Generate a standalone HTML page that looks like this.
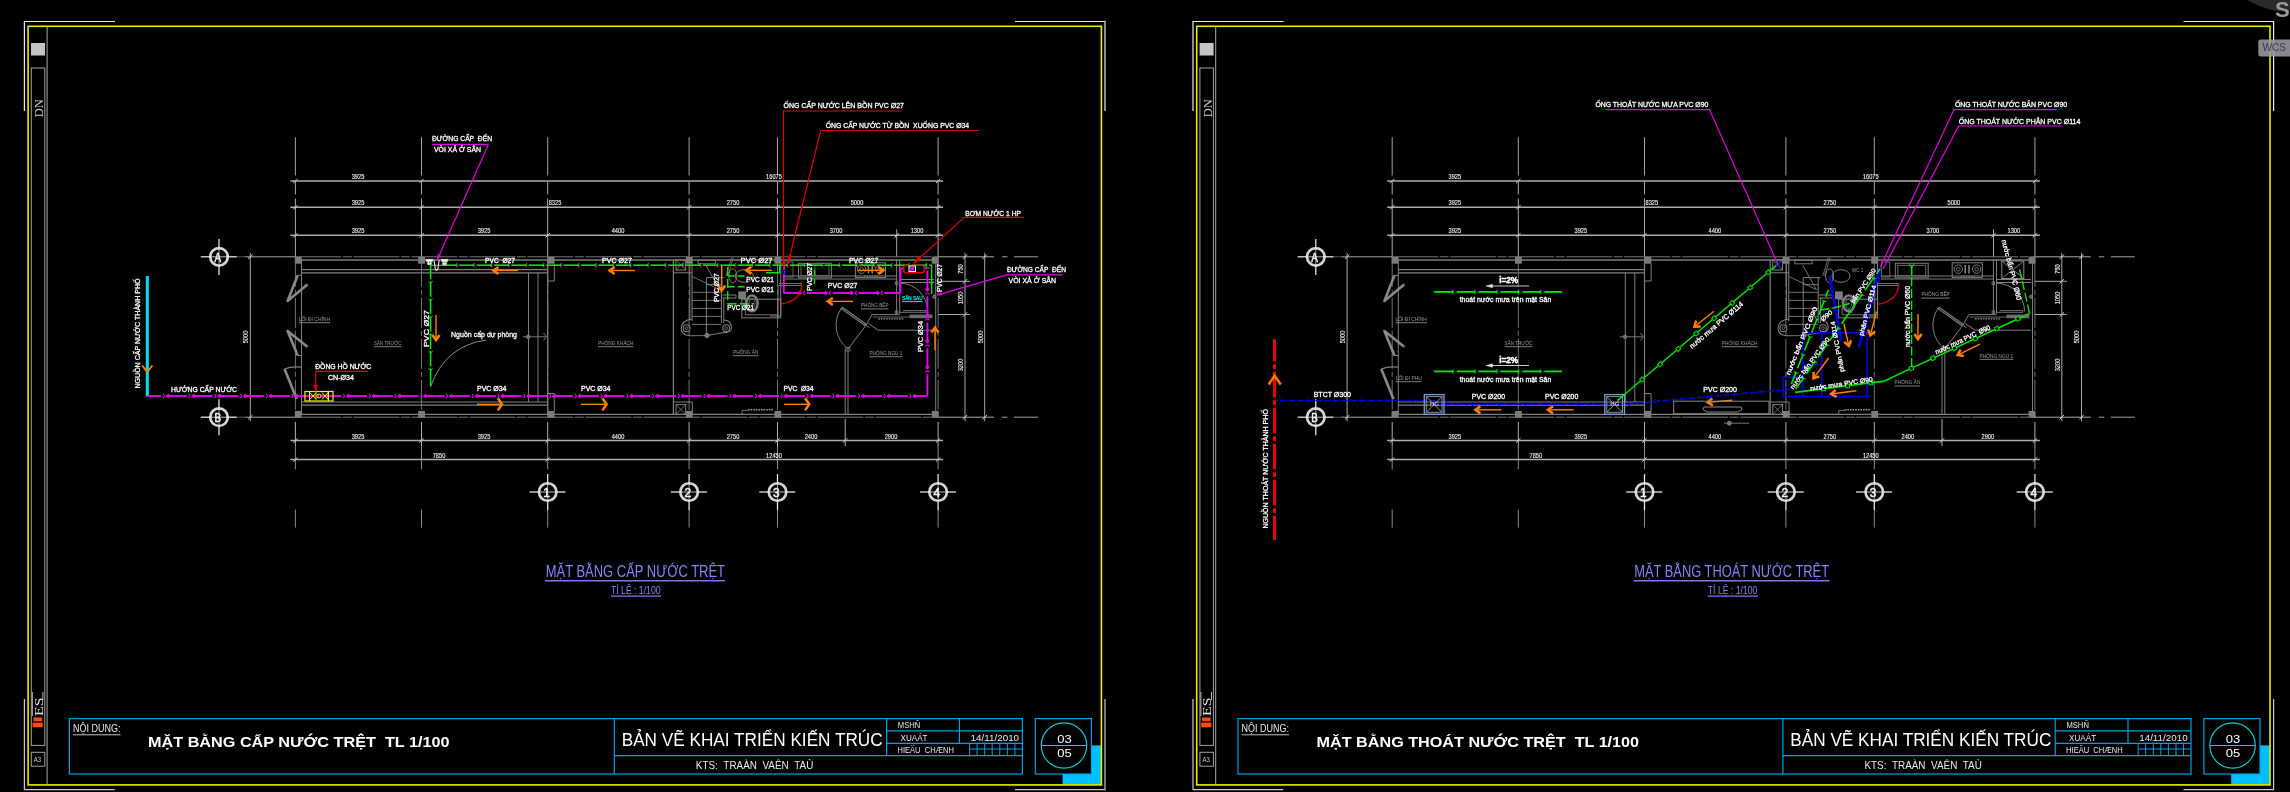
<!DOCTYPE html>
<html><head><meta charset="utf-8"><title>CAD</title>
<style>html,body{margin:0;padding:0;background:#000;overflow:hidden}body{width:2290px;height:792px;font-family:"Liberation Sans",sans-serif}svg{display:block;will-change:transform}</style></head>
<body>
<svg width="2290" height="792" viewBox="0 0 2290 792" font-family="Liberation Sans, sans-serif">
<rect width="2290" height="792" fill="#000"/>
<circle cx="2290" cy="-70" r="82" fill="#2a2a2a"/>
<g transform="translate(0.0,0)">
<polyline points="24.4,111.0 24.4,21.5 115.0,21.5" fill="none" stroke="#e8e8e8" stroke-width="1.2"/>
<polyline points="24.4,699.0 24.4,789.7 114.6,789.7" fill="none" stroke="#c8c8c8" stroke-width="1.2"/>
<polyline points="1015.0,21.5 1105.0,21.5 1105.0,111.0" fill="none" stroke="#e8e8e8" stroke-width="1.2"/>
<polyline points="1015.0,789.7 1105.0,789.7 1105.0,699.0" fill="none" stroke="#c8c8c8" stroke-width="1.2"/>
<rect x="1062.6" y="745.4" width="38.7" height="39.2" fill="#00bfff" stroke="none" stroke-width="0" rx="0"/>
<rect x="28.1" y="26.3" width="1073.3" height="758.6" fill="none" stroke="#eaea00" stroke-width="1.6" rx="0"/>
<line x1="47.1" y1="26.5" x2="47.1" y2="784.5" stroke="#a8a8a8" stroke-width="1"/>
<rect x="31.0" y="43.0" width="14.0" height="12.5" fill="#c4c4c4" stroke="none" stroke-width="0" rx="0"/>
<rect x="31.3" y="68.0" width="13.5" height="677.4" fill="none" stroke="#a0a0a0" stroke-width="1" rx="0"/>
<rect x="31.3" y="752.3" width="13.5" height="13.9" fill="none" stroke="#a0a0a0" stroke-width="1" rx="0"/>
<g><text x="33.8" y="761.9" font-size="6.6" fill="#ccc" textLength="7.4" lengthAdjust="spacingAndGlyphs">A3</text>
</g>
<g transform="rotate(-90 43.0 117.3)"><text x="43.0" y="117.3" font-size="12.5" fill="#c8c8c8" textLength="18.0" lengthAdjust="spacingAndGlyphs" font-family="Liberation Serif, serif">DN</text>
</g>
<line x1="32.3" y1="692.0" x2="32.3" y2="716.0" stroke="#bbb" stroke-width="1"/>
<line x1="42.9" y1="692.0" x2="42.9" y2="700.0" stroke="#bbb" stroke-width="1"/>
<g transform="rotate(-90 42.6 716.0)"><text x="42.6" y="716.0" font-size="13" fill="#e0e0e0" textLength="18.5" lengthAdjust="spacingAndGlyphs" font-family="Liberation Serif, serif">ES</text>
</g>
<rect x="33.5" y="717.5" width="8.5" height="3.8" fill="#ff4a14" stroke="none" stroke-width="0" rx="0"/>
<rect x="32.6" y="722.6" width="10.2" height="4.7" fill="#ff4a14" stroke="none" stroke-width="0" rx="0"/>
<rect x="69.4" y="718.6" width="953.0" height="55.4" fill="none" stroke="#009fe4" stroke-width="1.2" rx="0"/>
<line x1="614.3" y1="718.6" x2="614.3" y2="774.0" stroke="#009fe4" stroke-width="1.2"/>
<line x1="614.3" y1="755.6" x2="1022.4" y2="755.6" stroke="#009fe4" stroke-width="1.2"/>
<line x1="886.6" y1="718.6" x2="886.6" y2="755.6" stroke="#009fe4" stroke-width="1.2"/>
<line x1="959.4" y1="718.6" x2="959.4" y2="743.3" stroke="#009fe4" stroke-width="1.2"/>
<line x1="886.6" y1="730.9" x2="1022.4" y2="730.9" stroke="#009fe4" stroke-width="1.2"/>
<line x1="886.6" y1="743.3" x2="1022.4" y2="743.3" stroke="#009fe4" stroke-width="1.2"/>
<line x1="969.6" y1="749.0" x2="1022.4" y2="749.0" stroke="#009fe4" stroke-width="1"/>
<line x1="969.6" y1="743.3" x2="969.6" y2="755.6" stroke="#009fe4" stroke-width="1"/>
<line x1="977.1" y1="743.3" x2="977.1" y2="755.6" stroke="#009fe4" stroke-width="1"/>
<line x1="984.7" y1="743.3" x2="984.7" y2="755.6" stroke="#009fe4" stroke-width="1"/>
<line x1="992.2" y1="743.3" x2="992.2" y2="755.6" stroke="#009fe4" stroke-width="1"/>
<line x1="999.8" y1="743.3" x2="999.8" y2="755.6" stroke="#009fe4" stroke-width="1"/>
<line x1="1007.4" y1="743.3" x2="1007.4" y2="755.6" stroke="#009fe4" stroke-width="1"/>
<line x1="1014.9" y1="743.3" x2="1014.9" y2="755.6" stroke="#009fe4" stroke-width="1"/>
<g><text x="73.0" y="732.4" font-size="11.6" fill="#e8e8e8" textLength="47.5" lengthAdjust="spacingAndGlyphs">NỘI DUNG:</text>
<line x1="73.0" y1="734.8" x2="120.5" y2="734.8" stroke="#c0c0c0" stroke-width="1"/>
</g>
<g><text x="148.0" y="746.9" font-size="14.6" fill="#ffffff" font-weight="bold" textLength="301.5" lengthAdjust="spacingAndGlyphs">MẶT BẰNG CẤP NƯỚC TRỆT  TL 1/100</text>
</g>
<g><text x="621.7" y="745.9" font-size="18.9" fill="#ffffff" textLength="261.0" lengthAdjust="spacingAndGlyphs">BẢN VẼ KHAI TRIỂN KIẾN TRÚC</text>
</g>
<g><text x="695.8" y="769.4" font-size="10.6" fill="#e8e8e8" textLength="117.5" lengthAdjust="spacingAndGlyphs">KTS:  TRAÀN  VAÊN  TAÙ</text>
</g>
<g><text x="897.8" y="727.9" font-size="8.8" fill="#e8e8e8" textLength="22.5" lengthAdjust="spacingAndGlyphs">MSHÑ</text>
</g>
<g><text x="900.5" y="740.8" font-size="8.8" fill="#e8e8e8" textLength="27.0" lengthAdjust="spacingAndGlyphs">XUAÁT</text>
</g>
<g><text x="897.5" y="753.2" font-size="8.8" fill="#e8e8e8" textLength="56.5" lengthAdjust="spacingAndGlyphs">HIEÄU  CHÆNH</text>
</g>
<g><text x="970.6" y="740.9" font-size="8.8" fill="#e8e8e8" textLength="48.5" lengthAdjust="spacingAndGlyphs">14/11/2010</text>
</g>
<rect x="1035.3" y="718.6" width="56.1" height="55.4" fill="#000" stroke="#009fe4" stroke-width="1.2" rx="0"/>
<circle cx="1064.0" cy="745.5" r="22.7" fill="none" stroke="#00d2d2" stroke-width="1.2"/>
<line x1="1041.3" y1="745.5" x2="1086.7" y2="745.5" stroke="#00d2d2" stroke-width="1.2"/>
<g><text x="1064.5" y="743.1" font-size="11.6" fill="#ffffff" text-anchor="middle" textLength="14.5" lengthAdjust="spacingAndGlyphs">03</text>
</g>
<g><text x="1064.5" y="756.9" font-size="11.6" fill="#ffffff" text-anchor="middle" textLength="14.5" lengthAdjust="spacingAndGlyphs">05</text>
</g>
</g>
<g transform="translate(1168.6,0)">
<polyline points="24.4,111.0 24.4,21.5 115.0,21.5" fill="none" stroke="#e8e8e8" stroke-width="1.2"/>
<polyline points="24.4,699.0 24.4,789.7 114.6,789.7" fill="none" stroke="#c8c8c8" stroke-width="1.2"/>
<polyline points="1015.0,21.5 1105.0,21.5 1105.0,111.0" fill="none" stroke="#e8e8e8" stroke-width="1.2"/>
<polyline points="1015.0,789.7 1105.0,789.7 1105.0,699.0" fill="none" stroke="#c8c8c8" stroke-width="1.2"/>
<rect x="1062.6" y="745.4" width="38.7" height="39.2" fill="#00bfff" stroke="none" stroke-width="0" rx="0"/>
<rect x="28.1" y="26.3" width="1073.3" height="758.6" fill="none" stroke="#eaea00" stroke-width="1.6" rx="0"/>
<line x1="47.1" y1="26.5" x2="47.1" y2="784.5" stroke="#a8a8a8" stroke-width="1"/>
<rect x="31.0" y="43.0" width="14.0" height="12.5" fill="#c4c4c4" stroke="none" stroke-width="0" rx="0"/>
<rect x="31.3" y="68.0" width="13.5" height="677.4" fill="none" stroke="#a0a0a0" stroke-width="1" rx="0"/>
<rect x="31.3" y="752.3" width="13.5" height="13.9" fill="none" stroke="#a0a0a0" stroke-width="1" rx="0"/>
<g><text x="33.8" y="761.9" font-size="6.6" fill="#ccc" textLength="7.4" lengthAdjust="spacingAndGlyphs">A3</text>
</g>
<g transform="rotate(-90 43.0 117.3)"><text x="43.0" y="117.3" font-size="12.5" fill="#c8c8c8" textLength="18.0" lengthAdjust="spacingAndGlyphs" font-family="Liberation Serif, serif">DN</text>
</g>
<line x1="32.3" y1="692.0" x2="32.3" y2="716.0" stroke="#bbb" stroke-width="1"/>
<line x1="42.9" y1="692.0" x2="42.9" y2="700.0" stroke="#bbb" stroke-width="1"/>
<g transform="rotate(-90 42.6 716.0)"><text x="42.6" y="716.0" font-size="13" fill="#e0e0e0" textLength="18.5" lengthAdjust="spacingAndGlyphs" font-family="Liberation Serif, serif">ES</text>
</g>
<rect x="33.5" y="717.5" width="8.5" height="3.8" fill="#ff4a14" stroke="none" stroke-width="0" rx="0"/>
<rect x="32.6" y="722.6" width="10.2" height="4.7" fill="#ff4a14" stroke="none" stroke-width="0" rx="0"/>
<rect x="69.4" y="718.6" width="953.0" height="55.4" fill="none" stroke="#009fe4" stroke-width="1.2" rx="0"/>
<line x1="614.3" y1="718.6" x2="614.3" y2="774.0" stroke="#009fe4" stroke-width="1.2"/>
<line x1="614.3" y1="755.6" x2="1022.4" y2="755.6" stroke="#009fe4" stroke-width="1.2"/>
<line x1="886.6" y1="718.6" x2="886.6" y2="755.6" stroke="#009fe4" stroke-width="1.2"/>
<line x1="959.4" y1="718.6" x2="959.4" y2="743.3" stroke="#009fe4" stroke-width="1.2"/>
<line x1="886.6" y1="730.9" x2="1022.4" y2="730.9" stroke="#009fe4" stroke-width="1.2"/>
<line x1="886.6" y1="743.3" x2="1022.4" y2="743.3" stroke="#009fe4" stroke-width="1.2"/>
<line x1="969.6" y1="749.0" x2="1022.4" y2="749.0" stroke="#009fe4" stroke-width="1"/>
<line x1="969.6" y1="743.3" x2="969.6" y2="755.6" stroke="#009fe4" stroke-width="1"/>
<line x1="977.1" y1="743.3" x2="977.1" y2="755.6" stroke="#009fe4" stroke-width="1"/>
<line x1="984.7" y1="743.3" x2="984.7" y2="755.6" stroke="#009fe4" stroke-width="1"/>
<line x1="992.2" y1="743.3" x2="992.2" y2="755.6" stroke="#009fe4" stroke-width="1"/>
<line x1="999.8" y1="743.3" x2="999.8" y2="755.6" stroke="#009fe4" stroke-width="1"/>
<line x1="1007.4" y1="743.3" x2="1007.4" y2="755.6" stroke="#009fe4" stroke-width="1"/>
<line x1="1014.9" y1="743.3" x2="1014.9" y2="755.6" stroke="#009fe4" stroke-width="1"/>
<g><text x="73.0" y="732.4" font-size="11.6" fill="#e8e8e8" textLength="47.5" lengthAdjust="spacingAndGlyphs">NỘI DUNG:</text>
<line x1="73.0" y1="734.8" x2="120.5" y2="734.8" stroke="#c0c0c0" stroke-width="1"/>
</g>
<g><text x="148.0" y="746.9" font-size="14.6" fill="#ffffff" font-weight="bold" textLength="322.5" lengthAdjust="spacingAndGlyphs">MẶT BẰNG THOÁT NƯỚC TRỆT  TL 1/100</text>
</g>
<g><text x="621.7" y="745.9" font-size="18.9" fill="#ffffff" textLength="261.0" lengthAdjust="spacingAndGlyphs">BẢN VẼ KHAI TRIỂN KIẾN TRÚC</text>
</g>
<g><text x="695.8" y="769.4" font-size="10.6" fill="#e8e8e8" textLength="117.5" lengthAdjust="spacingAndGlyphs">KTS:  TRAÀN  VAÊN  TAÙ</text>
</g>
<g><text x="897.8" y="727.9" font-size="8.8" fill="#e8e8e8" textLength="22.5" lengthAdjust="spacingAndGlyphs">MSHÑ</text>
</g>
<g><text x="900.5" y="740.8" font-size="8.8" fill="#e8e8e8" textLength="27.0" lengthAdjust="spacingAndGlyphs">XUAÁT</text>
</g>
<g><text x="897.5" y="753.2" font-size="8.8" fill="#e8e8e8" textLength="56.5" lengthAdjust="spacingAndGlyphs">HIEÄU  CHÆNH</text>
</g>
<g><text x="970.6" y="740.9" font-size="8.8" fill="#e8e8e8" textLength="48.5" lengthAdjust="spacingAndGlyphs">14/11/2010</text>
</g>
<rect x="1035.3" y="718.6" width="56.1" height="55.4" fill="#000" stroke="#009fe4" stroke-width="1.2" rx="0"/>
<circle cx="1064.0" cy="745.5" r="22.7" fill="none" stroke="#00d2d2" stroke-width="1.2"/>
<line x1="1041.3" y1="745.5" x2="1086.7" y2="745.5" stroke="#00d2d2" stroke-width="1.2"/>
<g><text x="1064.5" y="743.1" font-size="11.6" fill="#ffffff" text-anchor="middle" textLength="14.5" lengthAdjust="spacingAndGlyphs">03</text>
</g>
<g><text x="1064.5" y="756.9" font-size="11.6" fill="#ffffff" text-anchor="middle" textLength="14.5" lengthAdjust="spacingAndGlyphs">05</text>
</g>
</g>
<g transform="translate(0.0,0)">
<line x1="295.4" y1="137.2" x2="295.4" y2="175.5" stroke="#a0a0a0" stroke-width="1"/>
<line x1="295.4" y1="182.0" x2="295.4" y2="194.5" stroke="#a8a8a8" stroke-width="1"/>
<line x1="295.4" y1="198.5" x2="295.4" y2="256.8" stroke="#a8a8a8" stroke-width="1"/>
<line x1="295.4" y1="256.8" x2="295.4" y2="417.2" stroke="#707070" stroke-width="1" stroke-dasharray="30 3 5 3"/>
<line x1="295.4" y1="422.0" x2="295.4" y2="446.0" stroke="#b0b0b0" stroke-width="1"/>
<line x1="295.4" y1="446.0" x2="295.4" y2="469.3" stroke="#8a8a8a" stroke-width="1"/>
<line x1="295.4" y1="509.5" x2="295.4" y2="527.6" stroke="#8a8a8a" stroke-width="1"/>
<line x1="421.5" y1="137.2" x2="421.5" y2="175.5" stroke="#a0a0a0" stroke-width="1"/>
<line x1="421.5" y1="182.0" x2="421.5" y2="194.5" stroke="#a8a8a8" stroke-width="1"/>
<line x1="421.5" y1="198.5" x2="421.5" y2="256.8" stroke="#a8a8a8" stroke-width="1"/>
<line x1="421.5" y1="256.8" x2="421.5" y2="417.2" stroke="#707070" stroke-width="1" stroke-dasharray="30 3 5 3"/>
<line x1="421.5" y1="422.0" x2="421.5" y2="446.0" stroke="#b0b0b0" stroke-width="1"/>
<line x1="421.5" y1="446.0" x2="421.5" y2="469.3" stroke="#8a8a8a" stroke-width="1"/>
<line x1="421.5" y1="509.5" x2="421.5" y2="527.6" stroke="#8a8a8a" stroke-width="1"/>
<line x1="547.7" y1="137.2" x2="547.7" y2="175.5" stroke="#a0a0a0" stroke-width="1"/>
<line x1="547.7" y1="182.0" x2="547.7" y2="194.5" stroke="#a8a8a8" stroke-width="1"/>
<line x1="547.7" y1="198.5" x2="547.7" y2="256.8" stroke="#a8a8a8" stroke-width="1"/>
<line x1="547.7" y1="256.8" x2="547.7" y2="417.2" stroke="#707070" stroke-width="1" stroke-dasharray="30 3 5 3"/>
<line x1="547.7" y1="422.0" x2="547.7" y2="446.0" stroke="#b0b0b0" stroke-width="1"/>
<line x1="547.7" y1="446.0" x2="547.7" y2="469.3" stroke="#8a8a8a" stroke-width="1"/>
<line x1="547.7" y1="509.5" x2="547.7" y2="527.6" stroke="#8a8a8a" stroke-width="1"/>
<line x1="689.1" y1="137.2" x2="689.1" y2="175.5" stroke="#a0a0a0" stroke-width="1"/>
<line x1="689.1" y1="182.0" x2="689.1" y2="194.5" stroke="#a8a8a8" stroke-width="1"/>
<line x1="689.1" y1="198.5" x2="689.1" y2="256.8" stroke="#a8a8a8" stroke-width="1"/>
<line x1="689.1" y1="256.8" x2="689.1" y2="417.2" stroke="#707070" stroke-width="1" stroke-dasharray="30 3 5 3"/>
<line x1="689.1" y1="422.0" x2="689.1" y2="446.0" stroke="#b0b0b0" stroke-width="1"/>
<line x1="689.1" y1="446.0" x2="689.1" y2="469.3" stroke="#8a8a8a" stroke-width="1"/>
<line x1="689.1" y1="509.5" x2="689.1" y2="527.6" stroke="#8a8a8a" stroke-width="1"/>
<line x1="777.5" y1="137.2" x2="777.5" y2="175.5" stroke="#a0a0a0" stroke-width="1"/>
<line x1="777.5" y1="182.0" x2="777.5" y2="194.5" stroke="#a8a8a8" stroke-width="1"/>
<line x1="777.5" y1="198.5" x2="777.5" y2="256.8" stroke="#a8a8a8" stroke-width="1"/>
<line x1="777.5" y1="256.8" x2="777.5" y2="417.2" stroke="#707070" stroke-width="1" stroke-dasharray="30 3 5 3"/>
<line x1="777.5" y1="422.0" x2="777.5" y2="446.0" stroke="#b0b0b0" stroke-width="1"/>
<line x1="777.5" y1="446.0" x2="777.5" y2="469.3" stroke="#8a8a8a" stroke-width="1"/>
<line x1="777.5" y1="509.5" x2="777.5" y2="527.6" stroke="#8a8a8a" stroke-width="1"/>
<line x1="938.1" y1="137.2" x2="938.1" y2="175.5" stroke="#a0a0a0" stroke-width="1"/>
<line x1="938.1" y1="182.0" x2="938.1" y2="194.5" stroke="#a8a8a8" stroke-width="1"/>
<line x1="938.1" y1="198.5" x2="938.1" y2="256.8" stroke="#a8a8a8" stroke-width="1"/>
<line x1="938.1" y1="256.8" x2="938.1" y2="417.2" stroke="#707070" stroke-width="1" stroke-dasharray="30 3 5 3"/>
<line x1="938.1" y1="422.0" x2="938.1" y2="446.0" stroke="#b0b0b0" stroke-width="1"/>
<line x1="938.1" y1="446.0" x2="938.1" y2="469.3" stroke="#8a8a8a" stroke-width="1"/>
<line x1="938.1" y1="509.5" x2="938.1" y2="527.6" stroke="#8a8a8a" stroke-width="1"/>
<line x1="896.7" y1="229.3" x2="896.7" y2="256.8" stroke="#a8a8a8" stroke-width="1"/>
<line x1="845.2" y1="419.0" x2="845.2" y2="446.0" stroke="#b0b0b0" stroke-width="1"/>
<line x1="237.0" y1="256.8" x2="245.0" y2="256.8" stroke="#555" stroke-width="1"/>
<line x1="245.0" y1="256.8" x2="295.4" y2="256.8" stroke="#a4a4a4" stroke-width="1"/>
<line x1="295.4" y1="256.8" x2="938.1" y2="256.8" stroke="#787878" stroke-width="1" stroke-dasharray="46 1.5 9 1.5"/>
<line x1="938.1" y1="256.8" x2="994.0" y2="256.8" stroke="#a8a8a8" stroke-width="1"/>
<line x1="1002.0" y1="256.8" x2="1038.0" y2="256.8" stroke="#a0a0a0" stroke-width="1" stroke-dasharray="5.5 6.5 24 0"/>
<line x1="237.0" y1="417.2" x2="245.0" y2="417.2" stroke="#555" stroke-width="1"/>
<line x1="245.0" y1="417.2" x2="295.4" y2="417.2" stroke="#a4a4a4" stroke-width="1"/>
<line x1="295.4" y1="417.2" x2="938.1" y2="417.2" stroke="#787878" stroke-width="1" stroke-dasharray="46 1.5 9 1.5"/>
<line x1="938.1" y1="417.2" x2="994.0" y2="417.2" stroke="#a8a8a8" stroke-width="1"/>
<line x1="1002.0" y1="417.2" x2="1038.0" y2="417.2" stroke="#a0a0a0" stroke-width="1" stroke-dasharray="5.5 6.5 24 0"/>
<line x1="290.4" y1="181.0" x2="943.1" y2="181.0" stroke="#acacac" stroke-width="1.5"/>
<line x1="293.2" y1="183.2" x2="297.6" y2="178.8" stroke="#d0d0d0" stroke-width="1"/>
<line x1="419.3" y1="183.2" x2="423.7" y2="178.8" stroke="#d0d0d0" stroke-width="1"/>
<line x1="935.9" y1="183.2" x2="940.3" y2="178.8" stroke="#d0d0d0" stroke-width="1"/>
<line x1="290.4" y1="207.3" x2="943.1" y2="207.3" stroke="#acacac" stroke-width="1.5"/>
<line x1="293.2" y1="209.5" x2="297.6" y2="205.1" stroke="#d0d0d0" stroke-width="1"/>
<line x1="419.3" y1="209.5" x2="423.7" y2="205.1" stroke="#d0d0d0" stroke-width="1"/>
<line x1="686.9" y1="209.5" x2="691.3" y2="205.1" stroke="#d0d0d0" stroke-width="1"/>
<line x1="775.3" y1="209.5" x2="779.7" y2="205.1" stroke="#d0d0d0" stroke-width="1"/>
<line x1="935.9" y1="209.5" x2="940.3" y2="205.1" stroke="#d0d0d0" stroke-width="1"/>
<line x1="290.4" y1="235.3" x2="943.1" y2="235.3" stroke="#acacac" stroke-width="1.5"/>
<line x1="293.2" y1="237.5" x2="297.6" y2="233.1" stroke="#d0d0d0" stroke-width="1"/>
<line x1="419.3" y1="237.5" x2="423.7" y2="233.1" stroke="#d0d0d0" stroke-width="1"/>
<line x1="545.5" y1="237.5" x2="549.9" y2="233.1" stroke="#d0d0d0" stroke-width="1"/>
<line x1="686.9" y1="237.5" x2="691.3" y2="233.1" stroke="#d0d0d0" stroke-width="1"/>
<line x1="775.3" y1="237.5" x2="779.7" y2="233.1" stroke="#d0d0d0" stroke-width="1"/>
<line x1="894.5" y1="237.5" x2="898.9" y2="233.1" stroke="#d0d0d0" stroke-width="1"/>
<line x1="935.9" y1="237.5" x2="940.3" y2="233.1" stroke="#d0d0d0" stroke-width="1"/>
<g><text x="358.0" y="179.0" font-size="6.3" fill="#f2f2f2" text-anchor="middle" textLength="12.6" lengthAdjust="spacingAndGlyphs" stroke="#f2f2f2" stroke-width="0.12">3925</text>
</g>
<g><text x="774.0" y="179.0" font-size="6.3" fill="#f2f2f2" text-anchor="middle" textLength="15.8" lengthAdjust="spacingAndGlyphs" stroke="#f2f2f2" stroke-width="0.12">16075</text>
</g>
<g><text x="358.0" y="205.3" font-size="6.3" fill="#f2f2f2" text-anchor="middle" textLength="12.6" lengthAdjust="spacingAndGlyphs" stroke="#f2f2f2" stroke-width="0.12">3925</text>
</g>
<g><text x="555.0" y="205.3" font-size="6.3" fill="#f2f2f2" text-anchor="middle" textLength="12.6" lengthAdjust="spacingAndGlyphs" stroke="#f2f2f2" stroke-width="0.12">8325</text>
</g>
<g><text x="733.0" y="205.3" font-size="6.3" fill="#f2f2f2" text-anchor="middle" textLength="12.6" lengthAdjust="spacingAndGlyphs" stroke="#f2f2f2" stroke-width="0.12">2750</text>
</g>
<g><text x="857.0" y="205.3" font-size="6.3" fill="#f2f2f2" text-anchor="middle" textLength="12.6" lengthAdjust="spacingAndGlyphs" stroke="#f2f2f2" stroke-width="0.12">5000</text>
</g>
<g><text x="358.0" y="233.3" font-size="6.3" fill="#f2f2f2" text-anchor="middle" textLength="12.6" lengthAdjust="spacingAndGlyphs" stroke="#f2f2f2" stroke-width="0.12">3925</text>
</g>
<g><text x="484.0" y="233.3" font-size="6.3" fill="#f2f2f2" text-anchor="middle" textLength="12.6" lengthAdjust="spacingAndGlyphs" stroke="#f2f2f2" stroke-width="0.12">3925</text>
</g>
<g><text x="618.0" y="233.3" font-size="6.3" fill="#f2f2f2" text-anchor="middle" textLength="12.6" lengthAdjust="spacingAndGlyphs" stroke="#f2f2f2" stroke-width="0.12">4400</text>
</g>
<g><text x="733.0" y="233.3" font-size="6.3" fill="#f2f2f2" text-anchor="middle" textLength="12.6" lengthAdjust="spacingAndGlyphs" stroke="#f2f2f2" stroke-width="0.12">2750</text>
</g>
<g><text x="836.0" y="233.3" font-size="6.3" fill="#f2f2f2" text-anchor="middle" textLength="12.6" lengthAdjust="spacingAndGlyphs" stroke="#f2f2f2" stroke-width="0.12">3700</text>
</g>
<g><text x="917.0" y="233.3" font-size="6.3" fill="#f2f2f2" text-anchor="middle" textLength="12.6" lengthAdjust="spacingAndGlyphs" stroke="#f2f2f2" stroke-width="0.12">1300</text>
</g>
<line x1="290.4" y1="440.5" x2="943.1" y2="440.5" stroke="#acacac" stroke-width="1.5"/>
<line x1="293.2" y1="442.7" x2="297.6" y2="438.3" stroke="#d0d0d0" stroke-width="1"/>
<line x1="419.3" y1="442.7" x2="423.7" y2="438.3" stroke="#d0d0d0" stroke-width="1"/>
<line x1="545.5" y1="442.7" x2="549.9" y2="438.3" stroke="#d0d0d0" stroke-width="1"/>
<line x1="686.9" y1="442.7" x2="691.3" y2="438.3" stroke="#d0d0d0" stroke-width="1"/>
<line x1="775.3" y1="442.7" x2="779.7" y2="438.3" stroke="#d0d0d0" stroke-width="1"/>
<line x1="843.0" y1="442.7" x2="847.4" y2="438.3" stroke="#d0d0d0" stroke-width="1"/>
<line x1="935.9" y1="442.7" x2="940.3" y2="438.3" stroke="#d0d0d0" stroke-width="1"/>
<line x1="290.4" y1="459.5" x2="943.1" y2="459.5" stroke="#acacac" stroke-width="1.5"/>
<line x1="293.2" y1="461.7" x2="297.6" y2="457.3" stroke="#d0d0d0" stroke-width="1"/>
<line x1="545.5" y1="461.7" x2="549.9" y2="457.3" stroke="#d0d0d0" stroke-width="1"/>
<line x1="935.9" y1="461.7" x2="940.3" y2="457.3" stroke="#d0d0d0" stroke-width="1"/>
<g><text x="358.0" y="438.5" font-size="6.3" fill="#f2f2f2" text-anchor="middle" textLength="12.6" lengthAdjust="spacingAndGlyphs" stroke="#f2f2f2" stroke-width="0.12">3925</text>
</g>
<g><text x="484.0" y="438.5" font-size="6.3" fill="#f2f2f2" text-anchor="middle" textLength="12.6" lengthAdjust="spacingAndGlyphs" stroke="#f2f2f2" stroke-width="0.12">3925</text>
</g>
<g><text x="618.0" y="438.5" font-size="6.3" fill="#f2f2f2" text-anchor="middle" textLength="12.6" lengthAdjust="spacingAndGlyphs" stroke="#f2f2f2" stroke-width="0.12">4400</text>
</g>
<g><text x="733.0" y="438.5" font-size="6.3" fill="#f2f2f2" text-anchor="middle" textLength="12.6" lengthAdjust="spacingAndGlyphs" stroke="#f2f2f2" stroke-width="0.12">2750</text>
</g>
<g><text x="811.0" y="438.5" font-size="6.3" fill="#f2f2f2" text-anchor="middle" textLength="12.6" lengthAdjust="spacingAndGlyphs" stroke="#f2f2f2" stroke-width="0.12">2400</text>
</g>
<g><text x="891.0" y="438.5" font-size="6.3" fill="#f2f2f2" text-anchor="middle" textLength="12.6" lengthAdjust="spacingAndGlyphs" stroke="#f2f2f2" stroke-width="0.12">2900</text>
</g>
<g><text x="439.0" y="457.5" font-size="6.3" fill="#f2f2f2" text-anchor="middle" textLength="12.6" lengthAdjust="spacingAndGlyphs" stroke="#f2f2f2" stroke-width="0.12">7850</text>
</g>
<g><text x="774.0" y="457.5" font-size="6.3" fill="#f2f2f2" text-anchor="middle" textLength="15.8" lengthAdjust="spacingAndGlyphs" stroke="#f2f2f2" stroke-width="0.12">12450</text>
</g>
<line x1="250.3" y1="252.8" x2="250.3" y2="421.2" stroke="#a8a8a8" stroke-width="1"/>
<line x1="248.1" y1="259.0" x2="252.5" y2="254.6" stroke="#d0d0d0" stroke-width="1"/>
<line x1="248.1" y1="419.4" x2="252.5" y2="415.0" stroke="#d0d0d0" stroke-width="1"/>
<g transform="rotate(-90 248.3 337.0)"><text x="248.3" y="337.0" font-size="6.3" fill="#f2f2f2" text-anchor="middle" textLength="12.6" lengthAdjust="spacingAndGlyphs" stroke="#f2f2f2" stroke-width="0.12">5000</text>
</g>
<line x1="965.0" y1="252.8" x2="965.0" y2="421.2" stroke="#a8a8a8" stroke-width="1"/>
<line x1="984.7" y1="252.8" x2="984.7" y2="421.2" stroke="#a8a8a8" stroke-width="1"/>
<line x1="962.8" y1="259.0" x2="967.2" y2="254.6" stroke="#d0d0d0" stroke-width="1"/>
<line x1="962.8" y1="283.5" x2="967.2" y2="279.1" stroke="#d0d0d0" stroke-width="1"/>
<line x1="962.8" y1="316.7" x2="967.2" y2="312.3" stroke="#d0d0d0" stroke-width="1"/>
<line x1="962.8" y1="419.4" x2="967.2" y2="415.0" stroke="#d0d0d0" stroke-width="1"/>
<line x1="982.5" y1="259.0" x2="986.9" y2="254.6" stroke="#d0d0d0" stroke-width="1"/>
<line x1="982.5" y1="419.4" x2="986.9" y2="415.0" stroke="#d0d0d0" stroke-width="1"/>
<line x1="938.1" y1="281.3" x2="970.0" y2="281.3" stroke="#a8a8a8" stroke-width="1"/>
<line x1="938.1" y1="314.5" x2="970.0" y2="314.5" stroke="#a8a8a8" stroke-width="1"/>
<g transform="rotate(-90 962.8 269.0)"><text x="962.8" y="269.0" font-size="6.3" fill="#f2f2f2" text-anchor="middle" textLength="9.4" lengthAdjust="spacingAndGlyphs" stroke="#f2f2f2" stroke-width="0.12">750</text>
</g>
<g transform="rotate(-90 962.8 298.0)"><text x="962.8" y="298.0" font-size="6.3" fill="#f2f2f2" text-anchor="middle" textLength="12.6" lengthAdjust="spacingAndGlyphs" stroke="#f2f2f2" stroke-width="0.12">1050</text>
</g>
<g transform="rotate(-90 962.8 365.0)"><text x="962.8" y="365.0" font-size="6.3" fill="#f2f2f2" text-anchor="middle" textLength="12.6" lengthAdjust="spacingAndGlyphs" stroke="#f2f2f2" stroke-width="0.12">3200</text>
</g>
<g transform="rotate(-90 982.5 337.0)"><text x="982.5" y="337.0" font-size="6.3" fill="#f2f2f2" text-anchor="middle" textLength="12.6" lengthAdjust="spacingAndGlyphs" stroke="#f2f2f2" stroke-width="0.12">5000</text>
</g>
<circle cx="219.0" cy="256.8" r="8.75" fill="#000" stroke="#d4d4d4" stroke-width="2.7"/>
<line x1="200.8" y1="256.8" x2="211.6" y2="256.8" stroke="#ececec" stroke-width="1.25"/>
<line x1="219.0" y1="238.9" x2="219.0" y2="249.7" stroke="#ececec" stroke-width="1.25"/>
<line x1="226.4" y1="256.8" x2="236.8" y2="256.8" stroke="#ececec" stroke-width="1.25"/>
<line x1="219.0" y1="264.5" x2="219.0" y2="274.9" stroke="#ececec" stroke-width="1.25"/>
<line x1="211.6" y1="256.8" x2="226.4" y2="256.8" stroke="#b8b8b8" stroke-width="1.0"/>
<line x1="219.0" y1="249.4" x2="219.0" y2="264.2" stroke="#b0b0b0" stroke-width="0.9"/>
<g><text x="217.8" y="261.5" font-size="12.5" fill="#f0f0f0" text-anchor="middle" textLength="6.6" lengthAdjust="spacingAndGlyphs" stroke="#f0f0f0" stroke-width="0.55">A</text>
</g>
<circle cx="219.0" cy="417.2" r="8.75" fill="#000" stroke="#d4d4d4" stroke-width="2.7"/>
<line x1="200.8" y1="417.2" x2="211.6" y2="417.2" stroke="#ececec" stroke-width="1.25"/>
<line x1="219.0" y1="399.3" x2="219.0" y2="410.1" stroke="#ececec" stroke-width="1.25"/>
<line x1="226.4" y1="417.2" x2="236.8" y2="417.2" stroke="#ececec" stroke-width="1.25"/>
<line x1="219.0" y1="424.9" x2="219.0" y2="435.3" stroke="#ececec" stroke-width="1.25"/>
<line x1="211.6" y1="417.2" x2="226.4" y2="417.2" stroke="#b8b8b8" stroke-width="1.0"/>
<line x1="219.0" y1="409.8" x2="219.0" y2="424.6" stroke="#b0b0b0" stroke-width="0.9"/>
<g><text x="217.8" y="421.9" font-size="12.5" fill="#f0f0f0" text-anchor="middle" textLength="6.6" lengthAdjust="spacingAndGlyphs" stroke="#f0f0f0" stroke-width="0.55">B</text>
</g>
<circle cx="547.7" cy="492.0" r="8.75" fill="#000" stroke="#d4d4d4" stroke-width="2.7"/>
<line x1="529.5" y1="492.0" x2="540.3" y2="492.0" stroke="#ececec" stroke-width="1.25"/>
<line x1="547.7" y1="474.1" x2="547.7" y2="484.9" stroke="#ececec" stroke-width="1.25"/>
<line x1="555.1" y1="492.0" x2="565.5" y2="492.0" stroke="#ececec" stroke-width="1.25"/>
<line x1="547.7" y1="499.7" x2="547.7" y2="510.1" stroke="#ececec" stroke-width="1.25"/>
<line x1="540.3" y1="492.0" x2="555.1" y2="492.0" stroke="#b8b8b8" stroke-width="1.0"/>
<line x1="547.7" y1="484.6" x2="547.7" y2="499.4" stroke="#b0b0b0" stroke-width="0.9"/>
<g><text x="546.5" y="496.7" font-size="12.5" fill="#f0f0f0" text-anchor="middle" textLength="6.6" lengthAdjust="spacingAndGlyphs" stroke="#f0f0f0" stroke-width="0.55">1</text>
</g>
<circle cx="689.1" cy="492.0" r="8.75" fill="#000" stroke="#d4d4d4" stroke-width="2.7"/>
<line x1="670.9" y1="492.0" x2="681.7" y2="492.0" stroke="#ececec" stroke-width="1.25"/>
<line x1="689.1" y1="474.1" x2="689.1" y2="484.9" stroke="#ececec" stroke-width="1.25"/>
<line x1="696.5" y1="492.0" x2="706.9" y2="492.0" stroke="#ececec" stroke-width="1.25"/>
<line x1="689.1" y1="499.7" x2="689.1" y2="510.1" stroke="#ececec" stroke-width="1.25"/>
<line x1="681.7" y1="492.0" x2="696.5" y2="492.0" stroke="#b8b8b8" stroke-width="1.0"/>
<line x1="689.1" y1="484.6" x2="689.1" y2="499.4" stroke="#b0b0b0" stroke-width="0.9"/>
<g><text x="687.9" y="496.7" font-size="12.5" fill="#f0f0f0" text-anchor="middle" textLength="6.6" lengthAdjust="spacingAndGlyphs" stroke="#f0f0f0" stroke-width="0.55">2</text>
</g>
<circle cx="777.5" cy="492.0" r="8.75" fill="#000" stroke="#d4d4d4" stroke-width="2.7"/>
<line x1="759.3" y1="492.0" x2="770.1" y2="492.0" stroke="#ececec" stroke-width="1.25"/>
<line x1="777.5" y1="474.1" x2="777.5" y2="484.9" stroke="#ececec" stroke-width="1.25"/>
<line x1="784.9" y1="492.0" x2="795.3" y2="492.0" stroke="#ececec" stroke-width="1.25"/>
<line x1="777.5" y1="499.7" x2="777.5" y2="510.1" stroke="#ececec" stroke-width="1.25"/>
<line x1="770.1" y1="492.0" x2="784.9" y2="492.0" stroke="#b8b8b8" stroke-width="1.0"/>
<line x1="777.5" y1="484.6" x2="777.5" y2="499.4" stroke="#b0b0b0" stroke-width="0.9"/>
<g><text x="776.3" y="496.7" font-size="12.5" fill="#f0f0f0" text-anchor="middle" textLength="6.6" lengthAdjust="spacingAndGlyphs" stroke="#f0f0f0" stroke-width="0.55">3</text>
</g>
<circle cx="938.1" cy="492.0" r="8.75" fill="#000" stroke="#d4d4d4" stroke-width="2.7"/>
<line x1="919.9" y1="492.0" x2="930.7" y2="492.0" stroke="#ececec" stroke-width="1.25"/>
<line x1="938.1" y1="474.1" x2="938.1" y2="484.9" stroke="#ececec" stroke-width="1.25"/>
<line x1="945.5" y1="492.0" x2="955.9" y2="492.0" stroke="#ececec" stroke-width="1.25"/>
<line x1="938.1" y1="499.7" x2="938.1" y2="510.1" stroke="#ececec" stroke-width="1.25"/>
<line x1="930.7" y1="492.0" x2="945.5" y2="492.0" stroke="#b8b8b8" stroke-width="1.0"/>
<line x1="938.1" y1="484.6" x2="938.1" y2="499.4" stroke="#b0b0b0" stroke-width="0.9"/>
<g><text x="936.9" y="496.7" font-size="12.5" fill="#f0f0f0" text-anchor="middle" textLength="6.6" lengthAdjust="spacingAndGlyphs" stroke="#f0f0f0" stroke-width="0.55">4</text>
</g>
<line x1="295.4" y1="260.0" x2="938.1" y2="260.0" stroke="#7e7e7e" stroke-width="1.3"/>
<line x1="295.4" y1="414.4" x2="938.1" y2="414.4" stroke="#7e7e7e" stroke-width="1.3"/>
<line x1="301.5" y1="260.0" x2="301.5" y2="414.4" stroke="#7e7e7e" stroke-width="1"/>
<line x1="301.5" y1="269.6" x2="547.7" y2="269.6" stroke="#7e7e7e" stroke-width="1.2"/>
<line x1="301.5" y1="272.8" x2="547.7" y2="272.8" stroke="#7e7e7e" stroke-width="1.2"/>
<line x1="301.5" y1="402.0" x2="547.7" y2="402.0" stroke="#7e7e7e" stroke-width="1.2"/>
<line x1="301.5" y1="405.2" x2="547.7" y2="405.2" stroke="#7e7e7e" stroke-width="1.2"/>
<line x1="528.5" y1="272.8" x2="528.5" y2="402.0" stroke="#7e7e7e" stroke-width="1"/>
<line x1="538.0" y1="272.8" x2="538.0" y2="402.0" stroke="#7e7e7e" stroke-width="1"/>
<polyline points="297.7,275.3 287.6,301.0 306.8,284.9" fill="none" stroke="#888" stroke-width="2.6" stroke-linejoin="round"/>
<polygon points="305.6,284.9 306.8,283.7 308.0,284.9 306.8,286.1" fill="none" stroke="#9a9a9a" stroke-width="0.8"/>
<polyline points="297.7,355.5 287.6,331.0 306.8,346.3" fill="none" stroke="#888" stroke-width="2.6" stroke-linejoin="round"/>
<polygon points="305.6,346.3 306.8,345.1 308.0,346.3 306.8,347.5" fill="none" stroke="#9a9a9a" stroke-width="0.8"/>
<line x1="297.7" y1="275.3" x2="301.5" y2="275.3" stroke="#7e7e7e" stroke-width="1"/>
<line x1="297.7" y1="355.5" x2="301.5" y2="355.5" stroke="#7e7e7e" stroke-width="1"/>
<path d="M301.5,367.1 Q291,366 284.5,369.1" fill="none" stroke="#7e7e7e" stroke-width="1.2"/>
<line x1="284.5" y1="369.1" x2="296.7" y2="399.0" stroke="#888" stroke-width="2.6"/>
<line x1="547.7" y1="260.0" x2="547.7" y2="414.4" stroke="#7e7e7e" stroke-width="1.2"/>
<line x1="673.4" y1="260.0" x2="673.4" y2="414.4" stroke="#7e7e7e" stroke-width="1.2"/>
<polyline points="554.3,263.5 554.3,281.0 547.7,281.0" fill="none" stroke="#7e7e7e" stroke-width="1"/>
<polyline points="554.3,411.0 554.3,393.5 547.7,393.5" fill="none" stroke="#7e7e7e" stroke-width="1"/>
<rect x="676.0" y="259.7" width="9.7" height="10.3" fill="none" stroke="#7e7e7e" stroke-width="1" rx="0"/>
<line x1="676.0" y1="259.7" x2="685.7" y2="270.0" stroke="#7e7e7e" stroke-width="0.8"/>
<line x1="685.7" y1="259.7" x2="676.0" y2="270.0" stroke="#7e7e7e" stroke-width="0.8"/>
<line x1="673.4" y1="272.8" x2="692.3" y2="272.8" stroke="#7e7e7e" stroke-width="1"/>
<rect x="676.0" y="404.6" width="9.7" height="9.8" fill="none" stroke="#7e7e7e" stroke-width="1" rx="0"/>
<line x1="676.0" y1="404.6" x2="685.7" y2="414.4" stroke="#7e7e7e" stroke-width="0.8"/>
<line x1="685.7" y1="404.6" x2="676.0" y2="414.4" stroke="#7e7e7e" stroke-width="0.8"/>
<line x1="673.4" y1="402.0" x2="692.3" y2="402.0" stroke="#7e7e7e" stroke-width="1"/>
<line x1="692.3" y1="402.0" x2="692.3" y2="414.4" stroke="#7e7e7e" stroke-width="1"/>
<circle cx="528.3" cy="336.8" r="1.8" fill="#777" stroke="#777" stroke-width="1"/>
<line x1="523.0" y1="336.8" x2="546.0" y2="336.8" stroke="#777" stroke-width="1"/>
<polyline points="543.5,333.0 546.5,336.8 543.5,340.6" fill="none" stroke="#777" stroke-width="1"/>
<line x1="689.8" y1="262.0" x2="689.8" y2="320.0" stroke="#7e7e7e" stroke-width="1"/>
<line x1="692.0" y1="262.0" x2="692.0" y2="321.0" stroke="#7e7e7e" stroke-width="1"/>
<rect x="698.0" y="260.2" width="17.4" height="3.6" fill="none" stroke="#7e7e7e" stroke-width="0.9" rx="0"/>
<line x1="692.0" y1="276.4" x2="719.6" y2="289.6" stroke="#7e7e7e" stroke-width="0.9"/>
<line x1="705.8" y1="265.0" x2="719.6" y2="289.6" stroke="#7e7e7e" stroke-width="0.9"/>
<line x1="706.4" y1="277.6" x2="706.4" y2="335.2" stroke="#7e7e7e" stroke-width="1"/>
<line x1="721.4" y1="277.6" x2="721.4" y2="323.0" stroke="#7e7e7e" stroke-width="1"/>
<line x1="723.8" y1="298.0" x2="723.8" y2="323.0" stroke="#7e7e7e" stroke-width="1"/>
<line x1="706.4" y1="277.6" x2="723.8" y2="277.6" stroke="#7e7e7e" stroke-width="1"/>
<line x1="692.0" y1="292.3" x2="721.4" y2="292.3" stroke="#7e7e7e" stroke-width="0.9"/>
<line x1="692.0" y1="300.4" x2="721.4" y2="300.4" stroke="#7e7e7e" stroke-width="0.9"/>
<line x1="692.0" y1="308.4" x2="721.4" y2="308.4" stroke="#7e7e7e" stroke-width="0.9"/>
<line x1="692.0" y1="316.4" x2="721.4" y2="316.4" stroke="#7e7e7e" stroke-width="0.9"/>
<line x1="692.0" y1="324.4" x2="721.4" y2="324.4" stroke="#7e7e7e" stroke-width="0.9"/>
<line x1="706.4" y1="284.6" x2="721.4" y2="284.6" stroke="#7e7e7e" stroke-width="0.9"/>
<path d="M692,319 Q682,320 681.2,328.5 Q681.5,335 689.6,335.8 L707,335.5 L722,332.8 Q731.5,333 731.5,327.5 Q731,320 723.8,320" fill="none" stroke="#7e7e7e" stroke-width="1.1"/>
<circle cx="686.6" cy="328.2" r="3.4" fill="none" stroke="#7e7e7e" stroke-width="1.1"/>
<circle cx="686.6" cy="328.2" r="1.4" fill="none" stroke="#7e7e7e" stroke-width="0.8"/>
<circle cx="726.2" cy="328.2" r="3.4" fill="none" stroke="#7e7e7e" stroke-width="1.1"/>
<circle cx="726.2" cy="328.2" r="1.4" fill="none" stroke="#7e7e7e" stroke-width="0.8"/>
<circle cx="707.0" cy="335.5" r="2.2" fill="#777" stroke="#777" stroke-width="1"/>
<line x1="731.5" y1="257.5" x2="726.0" y2="276.0" stroke="#7e7e7e" stroke-width="0.8"/>
<line x1="733.3" y1="257.5" x2="727.8" y2="276.0" stroke="#7e7e7e" stroke-width="0.8"/>
<line x1="722.3" y1="298.0" x2="736.0" y2="298.0" stroke="#7e7e7e" stroke-width="1"/>
<line x1="722.3" y1="295.0" x2="736.0" y2="295.0" stroke="#7e7e7e" stroke-width="1"/>
<line x1="736.0" y1="295.0" x2="736.0" y2="298.0" stroke="#7e7e7e" stroke-width="1"/>
<rect x="738.2" y="291.4" width="7.8" height="7.8" fill="#7c7c7c" stroke="none" stroke-width="0" rx="0"/>
<rect x="741.8" y="299.2" width="39.0" height="18.6" fill="none" stroke="#7e7e7e" stroke-width="1" rx="0"/>
<polyline points="745.4,299.2 745.4,314.8 778.4,314.8" fill="none" stroke="#7e7e7e" stroke-width="0.9"/>
<ellipse cx="752.0" cy="303.4" rx="5.6" ry="8" fill="none" stroke="#7e7e7e" stroke-width="2.4"/>
<ellipse cx="752.0" cy="303.4" rx="3" ry="5.2" fill="none" stroke="#7e7e7e" stroke-width="0.8"/>
<ellipse cx="732.8" cy="275.8" rx="4" ry="7" fill="none" stroke="#7e7e7e" stroke-width="1"/>
<ellipse cx="744.2" cy="276.0" rx="9" ry="6.3" fill="none" stroke="#7e7e7e" stroke-width="1"/>
<line x1="778.0" y1="285.0" x2="778.0" y2="318.0" stroke="#7e7e7e" stroke-width="1"/>
<polyline points="779.0,283.5 801.5,283.5 801.5,285.5 779.0,285.5" fill="none" stroke="#7e7e7e" stroke-width="0.9"/>
<line x1="780.7" y1="259.3" x2="780.7" y2="316.0" stroke="#7e7e7e" stroke-width="1"/>
<line x1="770.0" y1="316.0" x2="780.7" y2="316.0" stroke="#7e7e7e" stroke-width="1"/>
<line x1="784.0" y1="279.0" x2="896.6" y2="279.0" stroke="#7e7e7e" stroke-width="1"/>
<line x1="784.0" y1="276.0" x2="896.6" y2="276.0" stroke="#7e7e7e" stroke-width="1"/>
<rect x="798.5" y="263.3" width="32.9" height="14.5" fill="none" stroke="#7e7e7e" stroke-width="1" rx="0"/>
<rect x="801.0" y="265.3" width="28.0" height="10.5" fill="none" stroke="#7e7e7e" stroke-width="0.8" rx="0"/>
<line x1="815.0" y1="265.3" x2="815.0" y2="275.8" stroke="#7e7e7e" stroke-width="0.8"/>
<rect x="855.4" y="262.8" width="30.1" height="14.8" fill="none" stroke="#7e7e7e" stroke-width="1" rx="0"/>
<circle cx="861.5" cy="269.2" r="4.2" fill="none" stroke="#7e7e7e" stroke-width="1"/>
<circle cx="861.5" cy="269.2" r="1.9" fill="none" stroke="#7e7e7e" stroke-width="0.8"/>
<circle cx="879.8" cy="269.2" r="4.2" fill="none" stroke="#7e7e7e" stroke-width="1"/>
<circle cx="879.8" cy="269.2" r="1.9" fill="none" stroke="#7e7e7e" stroke-width="0.8"/>
<line x1="868.4" y1="265.0" x2="868.4" y2="273.6" stroke="#7e7e7e" stroke-width="1.6"/>
<line x1="872.2" y1="265.0" x2="872.2" y2="273.6" stroke="#7e7e7e" stroke-width="1.6"/>
<line x1="864.0" y1="276.0" x2="879.0" y2="276.0" stroke="#7e7e7e" stroke-width="1" stroke-dasharray="1.5 1"/>
<rect x="784.5" y="262.0" width="8.5" height="15.0" fill="none" stroke="#7e7e7e" stroke-width="0.8" rx="0"/>
<line x1="896.6" y1="259.3" x2="896.6" y2="313.8" stroke="#7e7e7e" stroke-width="1"/>
<line x1="899.7" y1="259.3" x2="899.7" y2="313.8" stroke="#7e7e7e" stroke-width="1"/>
<line x1="899.7" y1="282.5" x2="934.0" y2="282.5" stroke="#7e7e7e" stroke-width="1"/>
<line x1="899.7" y1="279.5" x2="934.0" y2="279.5" stroke="#7e7e7e" stroke-width="1"/>
<path d="M900,283.1 A28.3,28.6 0 0 1 927.8,311.7" fill="none" stroke="#7e7e7e" stroke-width="1"/>
<rect x="895.3" y="282.0" width="2.5" height="2.5" fill="none" stroke="#7e7e7e" stroke-width="0.8" rx="0"/>
<rect x="895.3" y="311.0" width="2.5" height="2.5" fill="none" stroke="#7e7e7e" stroke-width="0.8" rx="0"/>
<polyline points="899.0,312.3 926.0,312.3 926.0,310.6 903.0,310.6" fill="none" stroke="#7e7e7e" stroke-width="0.9"/>
<line x1="845.2" y1="349.0" x2="845.2" y2="414.0" stroke="#7e7e7e" stroke-width="1"/>
<line x1="848.0" y1="349.0" x2="848.0" y2="414.0" stroke="#7e7e7e" stroke-width="1"/>
<line x1="848.0" y1="349.0" x2="866.0" y2="325.3" stroke="#7e7e7e" stroke-width="1"/>
<line x1="841.4" y1="307.6" x2="865.8" y2="325.0" stroke="#7e7e7e" stroke-width="2.8"/>
<line x1="842.6" y1="308.5" x2="864.6" y2="324.2" stroke="#000" stroke-width="0.7"/>
<path d="M841.4,308 A30,30 0 0 0 848,349" fill="none" stroke="#7e7e7e" stroke-width="1"/>
<rect x="846.0" y="347.5" width="4.0" height="3.5" fill="none" stroke="#7e7e7e" stroke-width="0.8" rx="0"/>
<polyline points="866.0,325.3 872.0,314.6 899.7,314.6" fill="none" stroke="#7e7e7e" stroke-width="1"/>
<polyline points="868.5,323.6 878.3,330.2 934.0,330.2" fill="none" stroke="#7e7e7e" stroke-width="1"/>
<polyline points="866.0,325.3 869.5,327.6" fill="none" stroke="#7e7e7e" stroke-width="1"/>
<line x1="872.6" y1="317.0" x2="909.5" y2="317.0" stroke="#7e7e7e" stroke-width="0.8"/>
<rect x="909.5" y="314.6" width="23.0" height="3.6" fill="#6c6c6c" stroke="none" stroke-width="0" rx="0"/>
<line x1="878.3" y1="318.9" x2="903.7" y2="318.9" stroke="#9a9a9a" stroke-width="1.4" stroke-dasharray="1.6 1"/>
<line x1="935.7" y1="260.0" x2="935.7" y2="414.4" stroke="#7e7e7e" stroke-width="1"/>
<polyline points="692.3,414.4 742.0,414.4 742.0,410.4 748.0,410.4" fill="none" stroke="#7e7e7e" stroke-width="0.9"/>
<line x1="748.0" y1="409.8" x2="774.0" y2="409.8" stroke="#9a9a9a" stroke-width="1.4" stroke-dasharray="1.6 1"/>
<polygon points="932.4,296.7 934.2,294.6 936.0,296.7 934.2,298.8" fill="#555" stroke="#8a8a8a" stroke-width="0.8"/>
<rect x="294.9" y="256.9" width="6.8" height="6.8" fill="#7c7c7c" stroke="none" stroke-width="0" rx="0"/>
<rect x="418.2" y="256.9" width="6.8" height="6.8" fill="#7c7c7c" stroke="none" stroke-width="0" rx="0"/>
<rect x="547.7" y="256.9" width="6.8" height="6.8" fill="#7c7c7c" stroke="none" stroke-width="0" rx="0"/>
<rect x="685.9" y="256.9" width="6.8" height="6.8" fill="#7c7c7c" stroke="none" stroke-width="0" rx="0"/>
<rect x="774.5" y="256.9" width="6.8" height="6.8" fill="#7c7c7c" stroke="none" stroke-width="0" rx="0"/>
<rect x="931.8" y="256.9" width="6.8" height="6.8" fill="#7c7c7c" stroke="none" stroke-width="0" rx="0"/>
<rect x="294.9" y="410.9" width="6.8" height="6.8" fill="#7c7c7c" stroke="none" stroke-width="0" rx="0"/>
<rect x="418.2" y="410.9" width="6.8" height="6.8" fill="#7c7c7c" stroke="none" stroke-width="0" rx="0"/>
<rect x="547.7" y="410.9" width="6.8" height="6.8" fill="#7c7c7c" stroke="none" stroke-width="0" rx="0"/>
<rect x="685.9" y="410.9" width="6.8" height="6.8" fill="#7c7c7c" stroke="none" stroke-width="0" rx="0"/>
<rect x="774.5" y="410.9" width="6.8" height="6.8" fill="#7c7c7c" stroke="none" stroke-width="0" rx="0"/>
<rect x="931.8" y="410.9" width="6.8" height="6.8" fill="#7c7c7c" stroke="none" stroke-width="0" rx="0"/>
<g><text x="298.7" y="321.0" font-size="5.4" fill="#9a9a9a" textLength="31.3" lengthAdjust="spacingAndGlyphs">LỐI ĐI CHÍNH</text>
<line x1="298.7" y1="322.7" x2="330.0" y2="322.7" stroke="#9a9a9a" stroke-width="0.8"/>
</g>
</g>
<g><text x="374.0" y="345.0" font-size="5.4" fill="#9a9a9a" textLength="27.5" lengthAdjust="spacingAndGlyphs">SÂN TRƯỚC</text>
<line x1="374.0" y1="346.7" x2="401.5" y2="346.7" stroke="#9a9a9a" stroke-width="0.8"/>
</g>
<g><text x="598.0" y="345.0" font-size="5.4" fill="#9a9a9a" textLength="35.5" lengthAdjust="spacingAndGlyphs">PHÒNG KHÁCH</text>
<line x1="598.0" y1="346.7" x2="633.5" y2="346.7" stroke="#9a9a9a" stroke-width="0.8"/>
</g>
<g><text x="733.0" y="354.0" font-size="5.4" fill="#9a9a9a" textLength="25.5" lengthAdjust="spacingAndGlyphs">PHÒNG ĂN</text>
<line x1="733.0" y1="355.7" x2="758.5" y2="355.7" stroke="#9a9a9a" stroke-width="0.8"/>
</g>
<g><text x="869.4" y="355.0" font-size="5.4" fill="#9a9a9a" textLength="33.0" lengthAdjust="spacingAndGlyphs">PHÒNG NGỦ 1</text>
<line x1="869.4" y1="356.7" x2="902.4" y2="356.7" stroke="#9a9a9a" stroke-width="0.8"/>
</g>
<g><text x="861.0" y="307.2" font-size="5.4" fill="#9a9a9a" textLength="27.5" lengthAdjust="spacingAndGlyphs">PHÒNG BẾP</text>
<line x1="861.0" y1="308.9" x2="888.5" y2="308.9" stroke="#9a9a9a" stroke-width="0.8"/>
</g>
<g><text x="902.0" y="300.0" font-size="5.8" fill="#00e8e8" textLength="20.6" lengthAdjust="spacingAndGlyphs" stroke="#00e8e8" stroke-width="0.25">SÂN SAU</text>
<line x1="902.0" y1="301.6" x2="922.6" y2="301.6" stroke="#00e8e8" stroke-width="1"/>
</g>
<line x1="147.3" y1="276.0" x2="147.3" y2="396.5" stroke="#00e0ee" stroke-width="3"/>
<polyline points="142.2,365.5 147.3,372.0 152.4,365.5" fill="none" stroke="#ff8000" stroke-width="2"/>
<g transform="rotate(-90 140.0 388.5)"><text x="140.0" y="388.5" font-size="7.2" fill="#ffffff" textLength="110.0" lengthAdjust="spacingAndGlyphs" stroke="#ffffff" stroke-width="0.28">NGUỒN CẤP NƯỚC THÀNH PHỐ</text>
</g>
<g><text x="171.0" y="391.5" font-size="6.5" fill="#ffffff" textLength="66.0" lengthAdjust="spacingAndGlyphs" stroke="#ffffff" stroke-width="0.28">HƯỚNG CẤP NƯỚC</text>
</g>
<line x1="147.3" y1="396.0" x2="161.0" y2="396.0" stroke="#e600e6" stroke-width="1.9"/>
<path d="M163.0,393.8 Q165.6,396.0 163.0,398.2" fill="none" stroke="#e600e6" stroke-width="1.1"/>
<polygon points="166.0,396.0 168.2,394.0 170.4,396.0 168.2,398.0" fill="#e600e6" stroke="#e600e6" stroke-width="0.6"/>
<line x1="166.6" y1="396.0" x2="186.8" y2="396.0" stroke="#e600e6" stroke-width="1.9"/>
<path d="M188.7,393.8 Q191.3,396.0 188.7,398.2" fill="none" stroke="#e600e6" stroke-width="1.1"/>
<polygon points="191.7,396.0 193.9,394.0 196.1,396.0 193.9,398.0" fill="#e600e6" stroke="#e600e6" stroke-width="0.6"/>
<line x1="192.3" y1="396.0" x2="212.5" y2="396.0" stroke="#e600e6" stroke-width="1.9"/>
<path d="M214.5,393.8 Q217.1,396.0 214.5,398.2" fill="none" stroke="#e600e6" stroke-width="1.1"/>
<polygon points="217.4,396.0 219.7,394.0 221.9,396.0 219.7,398.0" fill="#e600e6" stroke="#e600e6" stroke-width="0.6"/>
<line x1="218.1" y1="396.0" x2="238.2" y2="396.0" stroke="#e600e6" stroke-width="1.9"/>
<path d="M240.2,393.8 Q242.8,396.0 240.2,398.2" fill="none" stroke="#e600e6" stroke-width="1.1"/>
<polygon points="243.2,396.0 245.4,394.0 247.6,396.0 245.4,398.0" fill="#e600e6" stroke="#e600e6" stroke-width="0.6"/>
<line x1="243.8" y1="396.0" x2="264.0" y2="396.0" stroke="#e600e6" stroke-width="1.9"/>
<path d="M266.0,393.8 Q268.6,396.0 266.0,398.2" fill="none" stroke="#e600e6" stroke-width="1.1"/>
<polygon points="268.9,396.0 271.1,394.0 273.4,396.0 271.1,398.0" fill="#e600e6" stroke="#e600e6" stroke-width="0.6"/>
<line x1="269.6" y1="396.0" x2="289.8" y2="396.0" stroke="#e600e6" stroke-width="1.9"/>
<path d="M291.7,393.8 Q294.3,396.0 291.7,398.2" fill="none" stroke="#e600e6" stroke-width="1.1"/>
<polygon points="294.7,396.0 296.9,394.0 299.1,396.0 296.9,398.0" fill="#e600e6" stroke="#e600e6" stroke-width="0.6"/>
<line x1="295.3" y1="396.0" x2="315.5" y2="396.0" stroke="#e600e6" stroke-width="1.9"/>
<path d="M317.5,393.8 Q320.1,396.0 317.5,398.2" fill="none" stroke="#e600e6" stroke-width="1.1"/>
<polygon points="320.5,396.0 322.6,394.0 324.9,396.0 322.6,398.0" fill="#e600e6" stroke="#e600e6" stroke-width="0.6"/>
<line x1="321.1" y1="396.0" x2="341.2" y2="396.0" stroke="#e600e6" stroke-width="1.9"/>
<path d="M343.2,393.8 Q345.8,396.0 343.2,398.2" fill="none" stroke="#e600e6" stroke-width="1.1"/>
<polygon points="346.2,396.0 348.4,394.0 350.6,396.0 348.4,398.0" fill="#e600e6" stroke="#e600e6" stroke-width="0.6"/>
<line x1="346.8" y1="396.0" x2="367.0" y2="396.0" stroke="#e600e6" stroke-width="1.9"/>
<path d="M369.0,393.8 Q371.6,396.0 369.0,398.2" fill="none" stroke="#e600e6" stroke-width="1.1"/>
<polygon points="372.0,396.0 374.1,394.0 376.4,396.0 374.1,398.0" fill="#e600e6" stroke="#e600e6" stroke-width="0.6"/>
<line x1="372.6" y1="396.0" x2="392.8" y2="396.0" stroke="#e600e6" stroke-width="1.9"/>
<path d="M394.7,393.8 Q397.3,396.0 394.7,398.2" fill="none" stroke="#e600e6" stroke-width="1.1"/>
<polygon points="397.7,396.0 399.9,394.0 402.1,396.0 399.9,398.0" fill="#e600e6" stroke="#e600e6" stroke-width="0.6"/>
<line x1="398.3" y1="396.0" x2="418.5" y2="396.0" stroke="#e600e6" stroke-width="1.9"/>
<path d="M420.5,393.8 Q423.1,396.0 420.5,398.2" fill="none" stroke="#e600e6" stroke-width="1.1"/>
<polygon points="423.5,396.0 425.7,394.0 427.9,396.0 425.7,398.0" fill="#e600e6" stroke="#e600e6" stroke-width="0.6"/>
<line x1="424.1" y1="396.0" x2="444.2" y2="396.0" stroke="#e600e6" stroke-width="1.9"/>
<path d="M446.2,393.8 Q448.8,396.0 446.2,398.2" fill="none" stroke="#e600e6" stroke-width="1.1"/>
<polygon points="449.2,396.0 451.4,394.0 453.6,396.0 451.4,398.0" fill="#e600e6" stroke="#e600e6" stroke-width="0.6"/>
<line x1="449.8" y1="396.0" x2="470.0" y2="396.0" stroke="#e600e6" stroke-width="1.9"/>
<path d="M472.0,393.8 Q474.6,396.0 472.0,398.2" fill="none" stroke="#e600e6" stroke-width="1.1"/>
<polygon points="475.0,396.0 477.2,394.0 479.4,396.0 477.2,398.0" fill="#e600e6" stroke="#e600e6" stroke-width="0.6"/>
<line x1="475.6" y1="396.0" x2="495.8" y2="396.0" stroke="#e600e6" stroke-width="1.9"/>
<path d="M497.7,393.8 Q500.3,396.0 497.7,398.2" fill="none" stroke="#e600e6" stroke-width="1.1"/>
<polygon points="500.7,396.0 502.9,394.0 505.1,396.0 502.9,398.0" fill="#e600e6" stroke="#e600e6" stroke-width="0.6"/>
<line x1="501.3" y1="396.0" x2="521.5" y2="396.0" stroke="#e600e6" stroke-width="1.9"/>
<path d="M523.5,393.8 Q526.1,396.0 523.5,398.2" fill="none" stroke="#e600e6" stroke-width="1.1"/>
<polygon points="526.5,396.0 528.7,394.0 530.9,396.0 528.7,398.0" fill="#e600e6" stroke="#e600e6" stroke-width="0.6"/>
<line x1="527.0" y1="396.0" x2="547.2" y2="396.0" stroke="#e600e6" stroke-width="1.9"/>
<path d="M549.2,393.8 Q551.8,396.0 549.2,398.2" fill="none" stroke="#e600e6" stroke-width="1.1"/>
<polygon points="552.2,396.0 554.4,394.0 556.6,396.0 554.4,398.0" fill="#e600e6" stroke="#e600e6" stroke-width="0.6"/>
<line x1="552.8" y1="396.0" x2="573.0" y2="396.0" stroke="#e600e6" stroke-width="1.9"/>
<path d="M575.0,393.8 Q577.6,396.0 575.0,398.2" fill="none" stroke="#e600e6" stroke-width="1.1"/>
<polygon points="578.0,396.0 580.2,394.0 582.4,396.0 580.2,398.0" fill="#e600e6" stroke="#e600e6" stroke-width="0.6"/>
<line x1="578.5" y1="396.0" x2="598.8" y2="396.0" stroke="#e600e6" stroke-width="1.9"/>
<path d="M600.7,393.8 Q603.3,396.0 600.7,398.2" fill="none" stroke="#e600e6" stroke-width="1.1"/>
<polygon points="603.7,396.0 605.9,394.0 608.1,396.0 605.9,398.0" fill="#e600e6" stroke="#e600e6" stroke-width="0.6"/>
<line x1="604.3" y1="396.0" x2="624.5" y2="396.0" stroke="#e600e6" stroke-width="1.9"/>
<path d="M626.5,393.8 Q629.1,396.0 626.5,398.2" fill="none" stroke="#e600e6" stroke-width="1.1"/>
<polygon points="629.5,396.0 631.7,394.0 633.9,396.0 631.7,398.0" fill="#e600e6" stroke="#e600e6" stroke-width="0.6"/>
<line x1="630.0" y1="396.0" x2="650.2" y2="396.0" stroke="#e600e6" stroke-width="1.9"/>
<path d="M652.2,393.8 Q654.8,396.0 652.2,398.2" fill="none" stroke="#e600e6" stroke-width="1.1"/>
<polygon points="655.2,396.0 657.4,394.0 659.6,396.0 657.4,398.0" fill="#e600e6" stroke="#e600e6" stroke-width="0.6"/>
<line x1="655.8" y1="396.0" x2="676.0" y2="396.0" stroke="#e600e6" stroke-width="1.9"/>
<path d="M678.0,393.8 Q680.6,396.0 678.0,398.2" fill="none" stroke="#e600e6" stroke-width="1.1"/>
<polygon points="681.0,396.0 683.2,394.0 685.4,396.0 683.2,398.0" fill="#e600e6" stroke="#e600e6" stroke-width="0.6"/>
<line x1="681.5" y1="396.0" x2="701.8" y2="396.0" stroke="#e600e6" stroke-width="1.9"/>
<path d="M703.7,393.8 Q706.3,396.0 703.7,398.2" fill="none" stroke="#e600e6" stroke-width="1.1"/>
<polygon points="706.7,396.0 708.9,394.0 711.1,396.0 708.9,398.0" fill="#e600e6" stroke="#e600e6" stroke-width="0.6"/>
<line x1="707.3" y1="396.0" x2="727.5" y2="396.0" stroke="#e600e6" stroke-width="1.9"/>
<path d="M729.5,393.8 Q732.1,396.0 729.5,398.2" fill="none" stroke="#e600e6" stroke-width="1.1"/>
<polygon points="732.5,396.0 734.7,394.0 736.9,396.0 734.7,398.0" fill="#e600e6" stroke="#e600e6" stroke-width="0.6"/>
<line x1="733.0" y1="396.0" x2="753.2" y2="396.0" stroke="#e600e6" stroke-width="1.9"/>
<path d="M755.2,393.8 Q757.8,396.0 755.2,398.2" fill="none" stroke="#e600e6" stroke-width="1.1"/>
<polygon points="758.2,396.0 760.4,394.0 762.6,396.0 760.4,398.0" fill="#e600e6" stroke="#e600e6" stroke-width="0.6"/>
<line x1="758.8" y1="396.0" x2="779.0" y2="396.0" stroke="#e600e6" stroke-width="1.9"/>
<path d="M781.0,393.8 Q783.6,396.0 781.0,398.2" fill="none" stroke="#e600e6" stroke-width="1.1"/>
<polygon points="784.0,396.0 786.2,394.0 788.4,396.0 786.2,398.0" fill="#e600e6" stroke="#e600e6" stroke-width="0.6"/>
<line x1="784.5" y1="396.0" x2="804.8" y2="396.0" stroke="#e600e6" stroke-width="1.9"/>
<path d="M806.7,393.8 Q809.3,396.0 806.7,398.2" fill="none" stroke="#e600e6" stroke-width="1.1"/>
<polygon points="809.7,396.0 811.9,394.0 814.1,396.0 811.9,398.0" fill="#e600e6" stroke="#e600e6" stroke-width="0.6"/>
<line x1="810.3" y1="396.0" x2="830.5" y2="396.0" stroke="#e600e6" stroke-width="1.9"/>
<path d="M832.5,393.8 Q835.1,396.0 832.5,398.2" fill="none" stroke="#e600e6" stroke-width="1.1"/>
<polygon points="835.5,396.0 837.7,394.0 839.9,396.0 837.7,398.0" fill="#e600e6" stroke="#e600e6" stroke-width="0.6"/>
<line x1="836.0" y1="396.0" x2="856.2" y2="396.0" stroke="#e600e6" stroke-width="1.9"/>
<path d="M858.2,393.8 Q860.8,396.0 858.2,398.2" fill="none" stroke="#e600e6" stroke-width="1.1"/>
<polygon points="861.2,396.0 863.4,394.0 865.6,396.0 863.4,398.0" fill="#e600e6" stroke="#e600e6" stroke-width="0.6"/>
<line x1="861.8" y1="396.0" x2="882.0" y2="396.0" stroke="#e600e6" stroke-width="1.9"/>
<path d="M884.0,393.8 Q886.6,396.0 884.0,398.2" fill="none" stroke="#e600e6" stroke-width="1.1"/>
<polygon points="887.0,396.0 889.2,394.0 891.4,396.0 889.2,398.0" fill="#e600e6" stroke="#e600e6" stroke-width="0.6"/>
<line x1="887.5" y1="396.0" x2="907.8" y2="396.0" stroke="#e600e6" stroke-width="1.9"/>
<path d="M909.7,393.8 Q912.3,396.0 909.7,398.2" fill="none" stroke="#e600e6" stroke-width="1.1"/>
<polygon points="912.7,396.0 914.9,394.0 917.1,396.0 914.9,398.0" fill="#e600e6" stroke="#e600e6" stroke-width="0.6"/>
<line x1="913.3" y1="396.0" x2="927.4" y2="396.0" stroke="#e600e6" stroke-width="1.9"/>
<line x1="927.4" y1="396.0" x2="927.4" y2="374.2" stroke="#e600e6" stroke-width="1.9"/>
<path d="M925.2,372.2 Q927.4,369.6 929.6,372.2" fill="none" stroke="#e600e6" stroke-width="1.1"/>
<polygon points="927.4,369.2 925.4,367.0 927.4,364.8 929.4,367.0" fill="#e600e6" stroke="#e600e6" stroke-width="0.6"/>
<line x1="927.4" y1="368.6" x2="927.4" y2="348.3" stroke="#e600e6" stroke-width="1.9"/>
<path d="M925.2,346.3 Q927.4,343.7 929.6,346.3" fill="none" stroke="#e600e6" stroke-width="1.1"/>
<polygon points="927.4,343.3 925.4,341.1 927.4,338.9 929.4,341.1" fill="#e600e6" stroke="#e600e6" stroke-width="0.6"/>
<line x1="927.4" y1="342.7" x2="927.4" y2="322.4" stroke="#e600e6" stroke-width="1.9"/>
<path d="M925.2,320.4 Q927.4,317.8 929.6,320.4" fill="none" stroke="#e600e6" stroke-width="1.1"/>
<polygon points="927.4,317.4 925.4,315.2 927.4,313.0 929.4,315.2" fill="#e600e6" stroke="#e600e6" stroke-width="0.6"/>
<line x1="927.4" y1="316.8" x2="927.4" y2="296.5" stroke="#e600e6" stroke-width="1.9"/>
<path d="M925.2,294.5 Q927.4,291.9 929.6,294.5" fill="none" stroke="#e600e6" stroke-width="1.1"/>
<polygon points="927.4,291.5 925.4,289.3 927.4,287.1 929.4,289.3" fill="#e600e6" stroke="#e600e6" stroke-width="0.6"/>
<line x1="927.4" y1="290.9" x2="927.4" y2="270.6" stroke="#e600e6" stroke-width="1.9"/>
<path d="M925.2,268.6 Q927.4,266.0 929.6,268.6" fill="none" stroke="#e600e6" stroke-width="1.1"/>
<polyline points="927.4,268.4 924.5,268.4" fill="none" stroke="#e600e6" stroke-width="1.9"/>
<polyline points="903.7,268.4 900.4,268.4 900.4,293.0" fill="none" stroke="#e600e6" stroke-width="1.9"/>
<line x1="783.8" y1="293.0" x2="783.8" y2="274.0" stroke="#e600e6" stroke-width="1.9"/>
<line x1="900.4" y1="293.0" x2="884.6" y2="293.0" stroke="#e600e6" stroke-width="1.9"/>
<path d="M882.6,295.2 Q880.0,293.0 882.6,290.8" fill="none" stroke="#e600e6" stroke-width="1.1"/>
<polygon points="879.6,293.0 877.4,295.0 875.2,293.0 877.4,291.0" fill="#e600e6" stroke="#e600e6" stroke-width="0.6"/>
<line x1="879.0" y1="293.0" x2="858.7" y2="293.0" stroke="#e600e6" stroke-width="1.9"/>
<path d="M856.7,295.2 Q854.1,293.0 856.7,290.8" fill="none" stroke="#e600e6" stroke-width="1.1"/>
<polygon points="853.7,293.0 851.5,295.0 849.3,293.0 851.5,291.0" fill="#e600e6" stroke="#e600e6" stroke-width="0.6"/>
<line x1="853.1" y1="293.0" x2="832.8" y2="293.0" stroke="#e600e6" stroke-width="1.9"/>
<path d="M830.8,295.2 Q828.2,293.0 830.8,290.8" fill="none" stroke="#e600e6" stroke-width="1.1"/>
<polygon points="827.8,293.0 825.6,295.0 823.4,293.0 825.6,291.0" fill="#e600e6" stroke="#e600e6" stroke-width="0.6"/>
<line x1="827.2" y1="293.0" x2="806.9" y2="293.0" stroke="#e600e6" stroke-width="1.9"/>
<path d="M804.9,295.2 Q802.3,293.0 804.9,290.8" fill="none" stroke="#e600e6" stroke-width="1.1"/>
<polygon points="801.9,293.0 799.7,295.0 797.5,293.0 799.7,291.0" fill="#e600e6" stroke="#e600e6" stroke-width="0.6"/>
<line x1="801.3" y1="293.0" x2="783.8" y2="293.0" stroke="#e600e6" stroke-width="1.9"/>
<rect x="305.0" y="391.5" width="28.0" height="9.5" fill="none" stroke="#f4f400" stroke-width="1.2" rx="0"/>
<line x1="309.5" y1="391.5" x2="309.5" y2="401.0" stroke="#f4f400" stroke-width="1"/>
<line x1="328.5" y1="391.5" x2="328.5" y2="401.0" stroke="#f4f400" stroke-width="1"/>
<polyline points="310.0,392.5 316.0,399.5 316.0,392.5 310.0,399.5" fill="none" stroke="#f4f400" stroke-width="1"/>
<polyline points="322.0,392.5 328.0,399.5 328.0,392.5 322.0,399.5" fill="none" stroke="#f4f400" stroke-width="1"/>
<circle cx="319.0" cy="396.0" r="2" fill="none" stroke="#f4f400" stroke-width="1"/>
<g><text x="315.2" y="369.3" font-size="6.5" fill="#ffffff" textLength="56.0" lengthAdjust="spacingAndGlyphs" stroke="#ffffff" stroke-width="0.28">ĐỒNG HỒ NƯỚC</text>
</g>
<g><text x="328.0" y="379.6" font-size="6.5" fill="#ffffff" textLength="26.0" lengthAdjust="spacingAndGlyphs" stroke="#ffffff" stroke-width="0.28">CN-Ø34</text>
</g>
<line x1="315.7" y1="371.4" x2="367.5" y2="371.4" stroke="#e60000" stroke-width="1.2"/>
<line x1="315.7" y1="371.4" x2="315.7" y2="391.5" stroke="#e60000" stroke-width="1.2"/>
<polygon points="315.7,391.5 313.9,385.0 317.5,385.0" fill="#e60000" stroke="#e60000" stroke-width="0.5"/>
<line x1="442.0" y1="265.2" x2="457.2" y2="265.2" stroke="#00e600" stroke-width="1.6"/>
<polyline points="457.3,267.4 455.3,265.2 457.3,263.0" fill="none" stroke="#00e600" stroke-width="0.9"/>
<line x1="459.4" y1="265.2" x2="474.6" y2="265.2" stroke="#00e600" stroke-width="1.6"/>
<polyline points="474.7,267.4 472.7,265.2 474.7,263.0" fill="none" stroke="#00e600" stroke-width="0.9"/>
<line x1="476.8" y1="265.2" x2="492.0" y2="265.2" stroke="#00e600" stroke-width="1.6"/>
<polyline points="492.1,267.4 490.1,265.2 492.1,263.0" fill="none" stroke="#00e600" stroke-width="0.9"/>
<line x1="494.2" y1="265.2" x2="509.4" y2="265.2" stroke="#00e600" stroke-width="1.6"/>
<polyline points="509.5,267.4 507.5,265.2 509.5,263.0" fill="none" stroke="#00e600" stroke-width="0.9"/>
<line x1="511.6" y1="265.2" x2="526.8" y2="265.2" stroke="#00e600" stroke-width="1.6"/>
<polyline points="526.9,267.4 524.9,265.2 526.9,263.0" fill="none" stroke="#00e600" stroke-width="0.9"/>
<line x1="529.0" y1="265.2" x2="544.2" y2="265.2" stroke="#00e600" stroke-width="1.6"/>
<polyline points="544.3,267.4 542.3,265.2 544.3,263.0" fill="none" stroke="#00e600" stroke-width="0.9"/>
<line x1="546.4" y1="265.2" x2="561.6" y2="265.2" stroke="#00e600" stroke-width="1.6"/>
<polyline points="561.7,267.4 559.7,265.2 561.7,263.0" fill="none" stroke="#00e600" stroke-width="0.9"/>
<line x1="563.8" y1="265.2" x2="579.0" y2="265.2" stroke="#00e600" stroke-width="1.6"/>
<polyline points="579.1,267.4 577.1,265.2 579.1,263.0" fill="none" stroke="#00e600" stroke-width="0.9"/>
<line x1="581.2" y1="265.2" x2="596.4" y2="265.2" stroke="#00e600" stroke-width="1.6"/>
<polyline points="596.5,267.4 594.5,265.2 596.5,263.0" fill="none" stroke="#00e600" stroke-width="0.9"/>
<line x1="598.6" y1="265.2" x2="613.8" y2="265.2" stroke="#00e600" stroke-width="1.6"/>
<polyline points="613.9,267.4 611.9,265.2 613.9,263.0" fill="none" stroke="#00e600" stroke-width="0.9"/>
<line x1="616.0" y1="265.2" x2="631.2" y2="265.2" stroke="#00e600" stroke-width="1.6"/>
<polyline points="631.3,267.4 629.3,265.2 631.3,263.0" fill="none" stroke="#00e600" stroke-width="0.9"/>
<line x1="633.4" y1="265.2" x2="648.6" y2="265.2" stroke="#00e600" stroke-width="1.6"/>
<polyline points="648.7,267.4 646.7,265.2 648.7,263.0" fill="none" stroke="#00e600" stroke-width="0.9"/>
<line x1="650.8" y1="265.2" x2="666.0" y2="265.2" stroke="#00e600" stroke-width="1.6"/>
<polyline points="666.1,267.4 664.1,265.2 666.1,263.0" fill="none" stroke="#00e600" stroke-width="0.9"/>
<line x1="668.2" y1="265.2" x2="683.4" y2="265.2" stroke="#00e600" stroke-width="1.6"/>
<polyline points="683.5,267.4 681.5,265.2 683.5,263.0" fill="none" stroke="#00e600" stroke-width="0.9"/>
<line x1="685.6" y1="265.2" x2="700.8" y2="265.2" stroke="#00e600" stroke-width="1.6"/>
<polyline points="700.9,267.4 698.9,265.2 700.9,263.0" fill="none" stroke="#00e600" stroke-width="0.9"/>
<line x1="703.0" y1="265.2" x2="718.2" y2="265.2" stroke="#00e600" stroke-width="1.6"/>
<polyline points="718.3,267.4 716.3,265.2 718.3,263.0" fill="none" stroke="#00e600" stroke-width="0.9"/>
<line x1="720.4" y1="265.2" x2="735.6" y2="265.2" stroke="#00e600" stroke-width="1.6"/>
<polyline points="735.7,267.4 733.7,265.2 735.7,263.0" fill="none" stroke="#00e600" stroke-width="0.9"/>
<line x1="737.8" y1="265.2" x2="753.0" y2="265.2" stroke="#00e600" stroke-width="1.6"/>
<polyline points="753.1,267.4 751.1,265.2 753.1,263.0" fill="none" stroke="#00e600" stroke-width="0.9"/>
<line x1="755.2" y1="265.2" x2="770.4" y2="265.2" stroke="#00e600" stroke-width="1.6"/>
<polyline points="770.5,267.4 768.5,265.2 770.5,263.0" fill="none" stroke="#00e600" stroke-width="0.9"/>
<line x1="772.6" y1="265.2" x2="787.8" y2="265.2" stroke="#00e600" stroke-width="1.6"/>
<polyline points="787.9,267.4 785.9,265.2 787.9,263.0" fill="none" stroke="#00e600" stroke-width="0.9"/>
<line x1="790.0" y1="265.2" x2="805.2" y2="265.2" stroke="#00e600" stroke-width="1.6"/>
<polyline points="805.3,267.4 803.3,265.2 805.3,263.0" fill="none" stroke="#00e600" stroke-width="0.9"/>
<line x1="807.4" y1="265.2" x2="822.6" y2="265.2" stroke="#00e600" stroke-width="1.6"/>
<polyline points="822.7,267.4 820.7,265.2 822.7,263.0" fill="none" stroke="#00e600" stroke-width="0.9"/>
<line x1="824.8" y1="265.2" x2="840.0" y2="265.2" stroke="#00e600" stroke-width="1.6"/>
<polyline points="840.1,267.4 838.1,265.2 840.1,263.0" fill="none" stroke="#00e600" stroke-width="0.9"/>
<line x1="842.2" y1="265.2" x2="857.4" y2="265.2" stroke="#00e600" stroke-width="1.6"/>
<polyline points="857.5,267.4 855.5,265.2 857.5,263.0" fill="none" stroke="#00e600" stroke-width="0.9"/>
<line x1="859.6" y1="265.2" x2="874.8" y2="265.2" stroke="#00e600" stroke-width="1.6"/>
<polyline points="874.9,267.4 872.9,265.2 874.9,263.0" fill="none" stroke="#00e600" stroke-width="0.9"/>
<line x1="877.0" y1="265.2" x2="892.2" y2="265.2" stroke="#00e600" stroke-width="1.6"/>
<polyline points="892.3,267.4 890.3,265.2 892.3,263.0" fill="none" stroke="#00e600" stroke-width="0.9"/>
<line x1="894.4" y1="265.2" x2="909.6" y2="265.2" stroke="#00e600" stroke-width="1.6"/>
<polyline points="909.7,267.4 907.7,265.2 909.7,263.0" fill="none" stroke="#00e600" stroke-width="0.9"/>
<line x1="911.8" y1="265.2" x2="927.0" y2="265.2" stroke="#00e600" stroke-width="1.6"/>
<polyline points="927.1,267.4 925.1,265.2 927.1,263.0" fill="none" stroke="#00e600" stroke-width="0.9"/>
<line x1="929.2" y1="265.2" x2="931.8" y2="265.2" stroke="#00e600" stroke-width="1.6"/>
<line x1="931.6" y1="265.3" x2="931.6" y2="294.0" stroke="#00e600" stroke-width="1.4"/>
<polyline points="929.4,281.2 931.6,284.0 933.8,281.2" fill="none" stroke="#00e600" stroke-width="1"/>
<line x1="430.6" y1="386.5" x2="430.6" y2="368.5" stroke="#00e600" stroke-width="1.6"/>
<polyline points="432.8,368.4 430.6,370.4 428.4,368.4" fill="none" stroke="#00e600" stroke-width="0.9"/>
<line x1="430.6" y1="366.3" x2="430.6" y2="351.1" stroke="#00e600" stroke-width="1.6"/>
<polyline points="432.8,351.0 430.6,353.0 428.4,351.0" fill="none" stroke="#00e600" stroke-width="0.9"/>
<line x1="430.6" y1="348.9" x2="430.6" y2="333.7" stroke="#00e600" stroke-width="1.6"/>
<polyline points="432.8,333.6 430.6,335.6 428.4,333.6" fill="none" stroke="#00e600" stroke-width="0.9"/>
<line x1="430.6" y1="331.5" x2="430.6" y2="316.3" stroke="#00e600" stroke-width="1.6"/>
<polyline points="432.8,316.2 430.6,318.2 428.4,316.2" fill="none" stroke="#00e600" stroke-width="0.9"/>
<line x1="430.6" y1="314.1" x2="430.6" y2="298.9" stroke="#00e600" stroke-width="1.6"/>
<polyline points="432.8,298.8 430.6,300.8 428.4,298.8" fill="none" stroke="#00e600" stroke-width="0.9"/>
<line x1="430.6" y1="296.7" x2="430.6" y2="281.5" stroke="#00e600" stroke-width="1.6"/>
<polyline points="432.8,281.4 430.6,283.4 428.4,281.4" fill="none" stroke="#00e600" stroke-width="0.9"/>
<line x1="430.6" y1="279.3" x2="430.6" y2="265.2" stroke="#00e600" stroke-width="1.6"/>
<line x1="430.6" y1="265.3" x2="443.0" y2="265.3" stroke="#00e600" stroke-width="1.2"/>
<path d="M434,259.8 L435.4,269.3 Q436.6,271.6 437.8,269.3 L439.2,259.8" fill="none" stroke="#e8e8e8" stroke-width="1.1"/>
<polygon points="425.8,259.3 433.0,259.3 431.2,264.8 427.8,264.8" fill="#f0f0f0" stroke="#ffffff" stroke-width="0.4"/>
<polygon points="441.1,259.3 448.1,259.3 446.3,264.8 442.9,264.8" fill="#f0f0f0" stroke="#ffffff" stroke-width="0.4"/>
<circle cx="427.3" cy="262.3" r="0.45" fill="#333" stroke="#333" stroke-width="0.3"/>
<circle cx="429.4" cy="262.3" r="0.45" fill="#333" stroke="#333" stroke-width="0.3"/>
<circle cx="431.5" cy="262.3" r="0.45" fill="#333" stroke="#333" stroke-width="0.3"/>
<circle cx="442.6" cy="262.3" r="0.45" fill="#333" stroke="#333" stroke-width="0.3"/>
<circle cx="444.6" cy="262.3" r="0.45" fill="#333" stroke="#333" stroke-width="0.3"/>
<circle cx="446.6" cy="262.3" r="0.45" fill="#333" stroke="#333" stroke-width="0.3"/>
<line x1="727.7" y1="267.0" x2="727.7" y2="303.7" stroke="#00e600" stroke-width="1.4" stroke-dasharray="9 3"/>
<line x1="727.7" y1="276.0" x2="745.7" y2="276.0" stroke="#00e600" stroke-width="1.4" stroke-dasharray="7 3"/>
<line x1="727.7" y1="286.7" x2="745.7" y2="286.7" stroke="#00e600" stroke-width="1.4" stroke-dasharray="7 3"/>
<line x1="727.7" y1="303.7" x2="754.0" y2="303.7" stroke="#00e600" stroke-width="1.4" stroke-dasharray="9 3"/>
<polyline points="765.9,272.8 779.7,272.8 779.7,265.3" fill="none" stroke="#00e600" stroke-width="1.4"/>
<line x1="814.5" y1="270.0" x2="814.5" y2="284.0" stroke="#00e600" stroke-width="1.4" stroke-dasharray="6 3"/>
<line x1="518.0" y1="270.5" x2="493.4" y2="270.5" stroke="#ff8000" stroke-width="1.4"/>
<polyline points="498.4,274.1 493.4,270.5 498.4,266.9" fill="none" stroke="#ff8000" stroke-width="2.5"/>
<line x1="635.0" y1="270.5" x2="609.6" y2="270.5" stroke="#ff8000" stroke-width="1.4"/>
<polyline points="614.6,274.1 609.6,270.5 614.6,266.9" fill="none" stroke="#ff8000" stroke-width="2.5"/>
<line x1="436.0" y1="315.0" x2="436.0" y2="340.0" stroke="#ff8000" stroke-width="1.4"/>
<polyline points="439.6,335.0 436.0,340.0 432.4,335.0" fill="none" stroke="#ff8000" stroke-width="2.5"/>
<line x1="477.0" y1="404.3" x2="502.0" y2="404.3" stroke="#ff8000" stroke-width="1.4"/>
<polyline points="497.8,398.2 502.0,404.3 497.8,410.4" fill="none" stroke="#ff8000" stroke-width="2.5"/>
<line x1="581.0" y1="404.3" x2="606.6" y2="404.3" stroke="#ff8000" stroke-width="1.4"/>
<polyline points="602.4,398.2 606.6,404.3 602.4,410.4" fill="none" stroke="#ff8000" stroke-width="2.5"/>
<line x1="784.0" y1="404.3" x2="809.3" y2="404.3" stroke="#ff8000" stroke-width="1.4"/>
<polyline points="805.1,398.2 809.3,404.3 805.1,410.4" fill="none" stroke="#ff8000" stroke-width="2.5"/>
<line x1="721.7" y1="266.0" x2="721.7" y2="290.5" stroke="#ff8000" stroke-width="1.4"/>
<polyline points="725.3,285.5 721.7,290.5 718.1,285.5" fill="none" stroke="#ff8000" stroke-width="2.5"/>
<line x1="772.0" y1="270.3" x2="746.3" y2="270.3" stroke="#ff8000" stroke-width="1.4"/>
<polyline points="751.3,273.9 746.3,270.3 751.3,266.7" fill="none" stroke="#ff8000" stroke-width="2.5"/>
<line x1="858.0" y1="270.3" x2="883.3" y2="270.3" stroke="#ff8000" stroke-width="1.4"/>
<polyline points="878.3,266.7 883.3,270.3 878.3,273.9" fill="none" stroke="#ff8000" stroke-width="2.5"/>
<line x1="853.0" y1="301.4" x2="827.8" y2="301.4" stroke="#ff8000" stroke-width="1.4"/>
<polyline points="832.8,305.0 827.8,301.4 832.8,297.8" fill="none" stroke="#ff8000" stroke-width="2.5"/>
<line x1="935.0" y1="350.3" x2="935.0" y2="327.6" stroke="#ff8000" stroke-width="1.4"/>
<polyline points="931.4,332.6 935.0,327.6 938.6,332.6" fill="none" stroke="#ff8000" stroke-width="2.5"/>
<g><text x="485.0" y="263.0" font-size="6.5" fill="#ffffff" textLength="30.0" lengthAdjust="spacingAndGlyphs" stroke="#ffffff" stroke-width="0.28">PVC  Ø27</text>
</g>
<g><text x="602.0" y="263.0" font-size="6.5" fill="#ffffff" textLength="30.0" lengthAdjust="spacingAndGlyphs" stroke="#ffffff" stroke-width="0.28">PVC Ø27</text>
</g>
<g><text x="740.6" y="262.8" font-size="6.5" fill="#ffffff" textLength="32.0" lengthAdjust="spacingAndGlyphs" stroke="#ffffff" stroke-width="0.28">PVC Ø27</text>
</g>
<g><text x="849.0" y="263.0" font-size="6.5" fill="#ffffff" textLength="29.3" lengthAdjust="spacingAndGlyphs" stroke="#ffffff" stroke-width="0.28">PVC Ø27</text>
</g>
<g><text x="827.8" y="288.3" font-size="6.5" fill="#ffffff" textLength="29.7" lengthAdjust="spacingAndGlyphs" stroke="#ffffff" stroke-width="0.28">PVC Ø27</text>
</g>
<g><text x="477.0" y="391.3" font-size="6.5" fill="#ffffff" textLength="29.5" lengthAdjust="spacingAndGlyphs" stroke="#ffffff" stroke-width="0.28">PVC Ø34</text>
</g>
<g><text x="581.0" y="391.3" font-size="6.5" fill="#ffffff" textLength="29.5" lengthAdjust="spacingAndGlyphs" stroke="#ffffff" stroke-width="0.28">PVC Ø34</text>
</g>
<g><text x="783.5" y="391.3" font-size="6.5" fill="#ffffff" textLength="30.0" lengthAdjust="spacingAndGlyphs" stroke="#ffffff" stroke-width="0.28">PVC  Ø34</text>
</g>
<g><text x="746.3" y="282.2" font-size="6.5" fill="#ffffff" textLength="27.7" lengthAdjust="spacingAndGlyphs" stroke="#ffffff" stroke-width="0.28">PVC Ø21</text>
</g>
<g><text x="746.3" y="292.2" font-size="6.5" fill="#ffffff" textLength="27.7" lengthAdjust="spacingAndGlyphs" stroke="#ffffff" stroke-width="0.28">PVC Ø21</text>
</g>
<g><text x="727.3" y="310.2" font-size="6.5" fill="#ffffff" textLength="26.7" lengthAdjust="spacingAndGlyphs" stroke="#ffffff" stroke-width="0.28">PVC Ø21</text>
</g>
<g transform="rotate(-90 428.5 347.0)"><text x="428.5" y="347.0" font-size="6.5" fill="#ffffff" textLength="37.0" lengthAdjust="spacingAndGlyphs" stroke="#ffffff" stroke-width="0.28">PVC Ø27</text>
</g>
<g transform="rotate(-90 719.0 302.0)"><text x="719.0" y="302.0" font-size="6.5" fill="#ffffff" textLength="28.6" lengthAdjust="spacingAndGlyphs" stroke="#ffffff" stroke-width="0.28">PVC Ø27</text>
</g>
<g transform="rotate(-90 811.5 291.0)"><text x="811.5" y="291.0" font-size="6.5" fill="#ffffff" textLength="28.0" lengthAdjust="spacingAndGlyphs" stroke="#ffffff" stroke-width="0.28">PVC Ø27</text>
</g>
<g transform="rotate(-90 941.5 292.0)"><text x="941.5" y="292.0" font-size="6.5" fill="#ffffff" textLength="28.0" lengthAdjust="spacingAndGlyphs" stroke="#ffffff" stroke-width="0.28">PVC Ø27</text>
</g>
<g transform="rotate(-90 923.0 352.0)"><text x="923.0" y="352.0" font-size="6.5" fill="#ffffff" textLength="31.0" lengthAdjust="spacingAndGlyphs" stroke="#ffffff" stroke-width="0.28">PVC Ø34</text>
</g>
<g><text x="451.0" y="336.8" font-size="7.4" fill="#ffffff" textLength="66.0" lengthAdjust="spacingAndGlyphs" stroke="#ffffff" stroke-width="0.28">Nguồn cấp dự phòng</text>
</g>
<path d="M486,340 Q445,346 430.6,386.5" fill="none" stroke="#8a8a8a" stroke-width="1"/>
<rect x="903.7" y="265.2" width="20.6" height="7.6" fill="none" stroke="#e60000" stroke-width="1.4" rx="2.5"/>
<rect x="909.0" y="266.0" width="6.5" height="5.5" fill="none" stroke="#ffffff" stroke-width="1" rx="0"/>
<rect x="910.7" y="267.4" width="3.1" height="2.8" fill="#e600e6" stroke="#e600e6" stroke-width="1" rx="0"/>
<path d="M801.8,284.8 Q801,301 781,304" fill="none" stroke="#e60000" stroke-width="1.3"/>
<circle cx="783.8" cy="272.0" r="1.8" fill="none" stroke="#0000e6" stroke-width="1.3"/>
<g><text x="783.5" y="107.8" font-size="7.2" fill="#ffffff" textLength="120.5" lengthAdjust="spacingAndGlyphs" stroke="#ffffff" stroke-width="0.28">ỐNG CẤP NƯỚC LÊN BỒN PVC Ø27</text>
</g>
<polyline points="901.0,111.0 783.5,111.0 783.5,270.0" fill="none" stroke="#e60000" stroke-width="1.2"/>
<rect x="782.6" y="263.0" width="2.4" height="2.0" fill="#e60000" stroke="#e60000" stroke-width="1" rx="0"/>
<g><text x="825.7" y="128.0" font-size="7.2" fill="#ffffff" textLength="143.4" lengthAdjust="spacingAndGlyphs" stroke="#ffffff" stroke-width="0.28">ỐNG CẤP NƯỚC TỪ BỒN  XUỐNG PVC Ø34</text>
</g>
<line x1="979.0" y1="130.5" x2="820.7" y2="130.5" stroke="#e60000" stroke-width="1.2"/>
<line x1="820.7" y1="130.5" x2="788.0" y2="263.5" stroke="#e60000" stroke-width="1.2"/>
<polygon points="788.0,263.5 788.2,255.3 791.7,256.2" fill="#e60000" stroke="#e60000" stroke-width="0.5"/>
<g><text x="965.3" y="216.2" font-size="7.2" fill="#ffffff" textLength="55.7" lengthAdjust="spacingAndGlyphs" stroke="#ffffff" stroke-width="0.28">BƠM NƯỚC 1 HP</text>
</g>
<line x1="1024.0" y1="217.4" x2="964.3" y2="217.4" stroke="#e60000" stroke-width="1.2"/>
<line x1="964.3" y1="217.4" x2="913.8" y2="263.3" stroke="#e60000" stroke-width="1.2"/>
<polygon points="913.8,263.3 918.5,256.6 920.9,259.3" fill="#e60000" stroke="#e60000" stroke-width="0.5"/>
<g><text x="432.0" y="141.0" font-size="7.2" fill="#ffffff" textLength="60.0" lengthAdjust="spacingAndGlyphs" stroke="#ffffff" stroke-width="0.28">ĐƯỜNG CẤP  ĐẾN</text>
</g>
<g><text x="434.0" y="152.0" font-size="7.2" fill="#ffffff" textLength="47.0" lengthAdjust="spacingAndGlyphs" stroke="#ffffff" stroke-width="0.28">VÒI XẢ Ở SÂN</text>
</g>
<line x1="432.0" y1="144.4" x2="488.4" y2="144.4" stroke="#e600e6" stroke-width="1.2"/>
<line x1="488.4" y1="144.4" x2="437.3" y2="259.8" stroke="#e600e6" stroke-width="1.2"/>
<polygon points="437.3,259.8 438.0,254.7 440.6,255.8" fill="#e600e6" stroke="#e600e6" stroke-width="0.5"/>
<g><text x="1007.0" y="272.3" font-size="7.2" fill="#ffffff" textLength="59.0" lengthAdjust="spacingAndGlyphs" stroke="#ffffff" stroke-width="0.28">ĐƯỜNG CẤP  ĐẾN</text>
</g>
<g><text x="1008.5" y="283.4" font-size="7.2" fill="#ffffff" textLength="47.5" lengthAdjust="spacingAndGlyphs" stroke="#ffffff" stroke-width="0.28">VÒI XẢ Ở SÂN</text>
</g>
<line x1="1062.8" y1="274.8" x2="1007.0" y2="274.8" stroke="#e600e6" stroke-width="1.2"/>
<line x1="1007.0" y1="274.8" x2="936.8" y2="295.2" stroke="#e600e6" stroke-width="1.2"/>
<polygon points="936.8,295.2 941.2,292.5 942.0,295.1" fill="#e600e6" stroke="#e600e6" stroke-width="0.5"/>
<g><text x="545.7" y="577.0" font-size="15.8" fill="#8484f8" textLength="179.3" lengthAdjust="spacingAndGlyphs">MẶT BẰNG CẤP NƯỚC TRỆT</text>
</g>
<line x1="545.0" y1="580.8" x2="725.0" y2="580.8" stroke="#7878ea" stroke-width="1.6"/>
<g><text x="611.0" y="593.8" font-size="10" fill="#8484f8" textLength="49.5" lengthAdjust="spacingAndGlyphs">TỈ LỆ : 1/100</text>
</g>
<line x1="611.0" y1="596.2" x2="661.0" y2="596.2" stroke="#7878ea" stroke-width="1.3"/>
<g transform="translate(1096.8,0)">
<line x1="295.4" y1="137.2" x2="295.4" y2="175.5" stroke="#a0a0a0" stroke-width="1"/>
<line x1="295.4" y1="182.0" x2="295.4" y2="194.5" stroke="#a8a8a8" stroke-width="1"/>
<line x1="295.4" y1="198.5" x2="295.4" y2="256.8" stroke="#a8a8a8" stroke-width="1"/>
<line x1="295.4" y1="256.8" x2="295.4" y2="417.2" stroke="#707070" stroke-width="1" stroke-dasharray="30 3 5 3"/>
<line x1="295.4" y1="422.0" x2="295.4" y2="446.0" stroke="#b0b0b0" stroke-width="1"/>
<line x1="295.4" y1="446.0" x2="295.4" y2="469.3" stroke="#8a8a8a" stroke-width="1"/>
<line x1="295.4" y1="509.5" x2="295.4" y2="527.6" stroke="#8a8a8a" stroke-width="1"/>
<line x1="421.5" y1="137.2" x2="421.5" y2="175.5" stroke="#a0a0a0" stroke-width="1"/>
<line x1="421.5" y1="182.0" x2="421.5" y2="194.5" stroke="#a8a8a8" stroke-width="1"/>
<line x1="421.5" y1="198.5" x2="421.5" y2="256.8" stroke="#a8a8a8" stroke-width="1"/>
<line x1="421.5" y1="256.8" x2="421.5" y2="417.2" stroke="#707070" stroke-width="1" stroke-dasharray="30 3 5 3"/>
<line x1="421.5" y1="422.0" x2="421.5" y2="446.0" stroke="#b0b0b0" stroke-width="1"/>
<line x1="421.5" y1="446.0" x2="421.5" y2="469.3" stroke="#8a8a8a" stroke-width="1"/>
<line x1="421.5" y1="509.5" x2="421.5" y2="527.6" stroke="#8a8a8a" stroke-width="1"/>
<line x1="547.7" y1="137.2" x2="547.7" y2="175.5" stroke="#a0a0a0" stroke-width="1"/>
<line x1="547.7" y1="182.0" x2="547.7" y2="194.5" stroke="#a8a8a8" stroke-width="1"/>
<line x1="547.7" y1="198.5" x2="547.7" y2="256.8" stroke="#a8a8a8" stroke-width="1"/>
<line x1="547.7" y1="256.8" x2="547.7" y2="417.2" stroke="#707070" stroke-width="1" stroke-dasharray="30 3 5 3"/>
<line x1="547.7" y1="422.0" x2="547.7" y2="446.0" stroke="#b0b0b0" stroke-width="1"/>
<line x1="547.7" y1="446.0" x2="547.7" y2="469.3" stroke="#8a8a8a" stroke-width="1"/>
<line x1="547.7" y1="509.5" x2="547.7" y2="527.6" stroke="#8a8a8a" stroke-width="1"/>
<line x1="689.1" y1="137.2" x2="689.1" y2="175.5" stroke="#a0a0a0" stroke-width="1"/>
<line x1="689.1" y1="182.0" x2="689.1" y2="194.5" stroke="#a8a8a8" stroke-width="1"/>
<line x1="689.1" y1="198.5" x2="689.1" y2="256.8" stroke="#a8a8a8" stroke-width="1"/>
<line x1="689.1" y1="256.8" x2="689.1" y2="417.2" stroke="#707070" stroke-width="1" stroke-dasharray="30 3 5 3"/>
<line x1="689.1" y1="422.0" x2="689.1" y2="446.0" stroke="#b0b0b0" stroke-width="1"/>
<line x1="689.1" y1="446.0" x2="689.1" y2="469.3" stroke="#8a8a8a" stroke-width="1"/>
<line x1="689.1" y1="509.5" x2="689.1" y2="527.6" stroke="#8a8a8a" stroke-width="1"/>
<line x1="777.5" y1="137.2" x2="777.5" y2="175.5" stroke="#a0a0a0" stroke-width="1"/>
<line x1="777.5" y1="182.0" x2="777.5" y2="194.5" stroke="#a8a8a8" stroke-width="1"/>
<line x1="777.5" y1="198.5" x2="777.5" y2="256.8" stroke="#a8a8a8" stroke-width="1"/>
<line x1="777.5" y1="256.8" x2="777.5" y2="417.2" stroke="#707070" stroke-width="1" stroke-dasharray="30 3 5 3"/>
<line x1="777.5" y1="422.0" x2="777.5" y2="446.0" stroke="#b0b0b0" stroke-width="1"/>
<line x1="777.5" y1="446.0" x2="777.5" y2="469.3" stroke="#8a8a8a" stroke-width="1"/>
<line x1="777.5" y1="509.5" x2="777.5" y2="527.6" stroke="#8a8a8a" stroke-width="1"/>
<line x1="938.1" y1="137.2" x2="938.1" y2="175.5" stroke="#a0a0a0" stroke-width="1"/>
<line x1="938.1" y1="182.0" x2="938.1" y2="194.5" stroke="#a8a8a8" stroke-width="1"/>
<line x1="938.1" y1="198.5" x2="938.1" y2="256.8" stroke="#a8a8a8" stroke-width="1"/>
<line x1="938.1" y1="256.8" x2="938.1" y2="417.2" stroke="#707070" stroke-width="1" stroke-dasharray="30 3 5 3"/>
<line x1="938.1" y1="422.0" x2="938.1" y2="446.0" stroke="#b0b0b0" stroke-width="1"/>
<line x1="938.1" y1="446.0" x2="938.1" y2="469.3" stroke="#8a8a8a" stroke-width="1"/>
<line x1="938.1" y1="509.5" x2="938.1" y2="527.6" stroke="#8a8a8a" stroke-width="1"/>
<line x1="896.7" y1="229.3" x2="896.7" y2="256.8" stroke="#a8a8a8" stroke-width="1"/>
<line x1="845.2" y1="419.0" x2="845.2" y2="446.0" stroke="#b0b0b0" stroke-width="1"/>
<line x1="237.0" y1="256.8" x2="245.0" y2="256.8" stroke="#555" stroke-width="1"/>
<line x1="245.0" y1="256.8" x2="295.4" y2="256.8" stroke="#a4a4a4" stroke-width="1"/>
<line x1="295.4" y1="256.8" x2="938.1" y2="256.8" stroke="#787878" stroke-width="1" stroke-dasharray="46 1.5 9 1.5"/>
<line x1="938.1" y1="256.8" x2="994.0" y2="256.8" stroke="#a8a8a8" stroke-width="1"/>
<line x1="1002.0" y1="256.8" x2="1038.0" y2="256.8" stroke="#a0a0a0" stroke-width="1" stroke-dasharray="5.5 6.5 24 0"/>
<line x1="237.0" y1="417.2" x2="245.0" y2="417.2" stroke="#555" stroke-width="1"/>
<line x1="245.0" y1="417.2" x2="295.4" y2="417.2" stroke="#a4a4a4" stroke-width="1"/>
<line x1="295.4" y1="417.2" x2="938.1" y2="417.2" stroke="#787878" stroke-width="1" stroke-dasharray="46 1.5 9 1.5"/>
<line x1="938.1" y1="417.2" x2="994.0" y2="417.2" stroke="#a8a8a8" stroke-width="1"/>
<line x1="1002.0" y1="417.2" x2="1038.0" y2="417.2" stroke="#a0a0a0" stroke-width="1" stroke-dasharray="5.5 6.5 24 0"/>
<line x1="290.4" y1="181.0" x2="943.1" y2="181.0" stroke="#acacac" stroke-width="1.5"/>
<line x1="293.2" y1="183.2" x2="297.6" y2="178.8" stroke="#d0d0d0" stroke-width="1"/>
<line x1="419.3" y1="183.2" x2="423.7" y2="178.8" stroke="#d0d0d0" stroke-width="1"/>
<line x1="935.9" y1="183.2" x2="940.3" y2="178.8" stroke="#d0d0d0" stroke-width="1"/>
<line x1="290.4" y1="207.3" x2="943.1" y2="207.3" stroke="#acacac" stroke-width="1.5"/>
<line x1="293.2" y1="209.5" x2="297.6" y2="205.1" stroke="#d0d0d0" stroke-width="1"/>
<line x1="419.3" y1="209.5" x2="423.7" y2="205.1" stroke="#d0d0d0" stroke-width="1"/>
<line x1="686.9" y1="209.5" x2="691.3" y2="205.1" stroke="#d0d0d0" stroke-width="1"/>
<line x1="775.3" y1="209.5" x2="779.7" y2="205.1" stroke="#d0d0d0" stroke-width="1"/>
<line x1="935.9" y1="209.5" x2="940.3" y2="205.1" stroke="#d0d0d0" stroke-width="1"/>
<line x1="290.4" y1="235.3" x2="943.1" y2="235.3" stroke="#acacac" stroke-width="1.5"/>
<line x1="293.2" y1="237.5" x2="297.6" y2="233.1" stroke="#d0d0d0" stroke-width="1"/>
<line x1="419.3" y1="237.5" x2="423.7" y2="233.1" stroke="#d0d0d0" stroke-width="1"/>
<line x1="545.5" y1="237.5" x2="549.9" y2="233.1" stroke="#d0d0d0" stroke-width="1"/>
<line x1="686.9" y1="237.5" x2="691.3" y2="233.1" stroke="#d0d0d0" stroke-width="1"/>
<line x1="775.3" y1="237.5" x2="779.7" y2="233.1" stroke="#d0d0d0" stroke-width="1"/>
<line x1="894.5" y1="237.5" x2="898.9" y2="233.1" stroke="#d0d0d0" stroke-width="1"/>
<line x1="935.9" y1="237.5" x2="940.3" y2="233.1" stroke="#d0d0d0" stroke-width="1"/>
<g><text x="358.0" y="179.0" font-size="6.3" fill="#f2f2f2" text-anchor="middle" textLength="12.6" lengthAdjust="spacingAndGlyphs" stroke="#f2f2f2" stroke-width="0.12">3925</text>
</g>
<g><text x="774.0" y="179.0" font-size="6.3" fill="#f2f2f2" text-anchor="middle" textLength="15.8" lengthAdjust="spacingAndGlyphs" stroke="#f2f2f2" stroke-width="0.12">16075</text>
</g>
<g><text x="358.0" y="205.3" font-size="6.3" fill="#f2f2f2" text-anchor="middle" textLength="12.6" lengthAdjust="spacingAndGlyphs" stroke="#f2f2f2" stroke-width="0.12">3925</text>
</g>
<g><text x="555.0" y="205.3" font-size="6.3" fill="#f2f2f2" text-anchor="middle" textLength="12.6" lengthAdjust="spacingAndGlyphs" stroke="#f2f2f2" stroke-width="0.12">8325</text>
</g>
<g><text x="733.0" y="205.3" font-size="6.3" fill="#f2f2f2" text-anchor="middle" textLength="12.6" lengthAdjust="spacingAndGlyphs" stroke="#f2f2f2" stroke-width="0.12">2750</text>
</g>
<g><text x="857.0" y="205.3" font-size="6.3" fill="#f2f2f2" text-anchor="middle" textLength="12.6" lengthAdjust="spacingAndGlyphs" stroke="#f2f2f2" stroke-width="0.12">5000</text>
</g>
<g><text x="358.0" y="233.3" font-size="6.3" fill="#f2f2f2" text-anchor="middle" textLength="12.6" lengthAdjust="spacingAndGlyphs" stroke="#f2f2f2" stroke-width="0.12">3925</text>
</g>
<g><text x="484.0" y="233.3" font-size="6.3" fill="#f2f2f2" text-anchor="middle" textLength="12.6" lengthAdjust="spacingAndGlyphs" stroke="#f2f2f2" stroke-width="0.12">3925</text>
</g>
<g><text x="618.0" y="233.3" font-size="6.3" fill="#f2f2f2" text-anchor="middle" textLength="12.6" lengthAdjust="spacingAndGlyphs" stroke="#f2f2f2" stroke-width="0.12">4400</text>
</g>
<g><text x="733.0" y="233.3" font-size="6.3" fill="#f2f2f2" text-anchor="middle" textLength="12.6" lengthAdjust="spacingAndGlyphs" stroke="#f2f2f2" stroke-width="0.12">2750</text>
</g>
<g><text x="836.0" y="233.3" font-size="6.3" fill="#f2f2f2" text-anchor="middle" textLength="12.6" lengthAdjust="spacingAndGlyphs" stroke="#f2f2f2" stroke-width="0.12">3700</text>
</g>
<g><text x="917.0" y="233.3" font-size="6.3" fill="#f2f2f2" text-anchor="middle" textLength="12.6" lengthAdjust="spacingAndGlyphs" stroke="#f2f2f2" stroke-width="0.12">1300</text>
</g>
<line x1="290.4" y1="440.5" x2="943.1" y2="440.5" stroke="#acacac" stroke-width="1.5"/>
<line x1="293.2" y1="442.7" x2="297.6" y2="438.3" stroke="#d0d0d0" stroke-width="1"/>
<line x1="419.3" y1="442.7" x2="423.7" y2="438.3" stroke="#d0d0d0" stroke-width="1"/>
<line x1="545.5" y1="442.7" x2="549.9" y2="438.3" stroke="#d0d0d0" stroke-width="1"/>
<line x1="686.9" y1="442.7" x2="691.3" y2="438.3" stroke="#d0d0d0" stroke-width="1"/>
<line x1="775.3" y1="442.7" x2="779.7" y2="438.3" stroke="#d0d0d0" stroke-width="1"/>
<line x1="843.0" y1="442.7" x2="847.4" y2="438.3" stroke="#d0d0d0" stroke-width="1"/>
<line x1="935.9" y1="442.7" x2="940.3" y2="438.3" stroke="#d0d0d0" stroke-width="1"/>
<line x1="290.4" y1="459.5" x2="943.1" y2="459.5" stroke="#acacac" stroke-width="1.5"/>
<line x1="293.2" y1="461.7" x2="297.6" y2="457.3" stroke="#d0d0d0" stroke-width="1"/>
<line x1="545.5" y1="461.7" x2="549.9" y2="457.3" stroke="#d0d0d0" stroke-width="1"/>
<line x1="935.9" y1="461.7" x2="940.3" y2="457.3" stroke="#d0d0d0" stroke-width="1"/>
<g><text x="358.0" y="438.5" font-size="6.3" fill="#f2f2f2" text-anchor="middle" textLength="12.6" lengthAdjust="spacingAndGlyphs" stroke="#f2f2f2" stroke-width="0.12">3925</text>
</g>
<g><text x="484.0" y="438.5" font-size="6.3" fill="#f2f2f2" text-anchor="middle" textLength="12.6" lengthAdjust="spacingAndGlyphs" stroke="#f2f2f2" stroke-width="0.12">3925</text>
</g>
<g><text x="618.0" y="438.5" font-size="6.3" fill="#f2f2f2" text-anchor="middle" textLength="12.6" lengthAdjust="spacingAndGlyphs" stroke="#f2f2f2" stroke-width="0.12">4400</text>
</g>
<g><text x="733.0" y="438.5" font-size="6.3" fill="#f2f2f2" text-anchor="middle" textLength="12.6" lengthAdjust="spacingAndGlyphs" stroke="#f2f2f2" stroke-width="0.12">2750</text>
</g>
<g><text x="811.0" y="438.5" font-size="6.3" fill="#f2f2f2" text-anchor="middle" textLength="12.6" lengthAdjust="spacingAndGlyphs" stroke="#f2f2f2" stroke-width="0.12">2400</text>
</g>
<g><text x="891.0" y="438.5" font-size="6.3" fill="#f2f2f2" text-anchor="middle" textLength="12.6" lengthAdjust="spacingAndGlyphs" stroke="#f2f2f2" stroke-width="0.12">2900</text>
</g>
<g><text x="439.0" y="457.5" font-size="6.3" fill="#f2f2f2" text-anchor="middle" textLength="12.6" lengthAdjust="spacingAndGlyphs" stroke="#f2f2f2" stroke-width="0.12">7850</text>
</g>
<g><text x="774.0" y="457.5" font-size="6.3" fill="#f2f2f2" text-anchor="middle" textLength="15.8" lengthAdjust="spacingAndGlyphs" stroke="#f2f2f2" stroke-width="0.12">12450</text>
</g>
<line x1="250.3" y1="252.8" x2="250.3" y2="421.2" stroke="#a8a8a8" stroke-width="1"/>
<line x1="248.1" y1="259.0" x2="252.5" y2="254.6" stroke="#d0d0d0" stroke-width="1"/>
<line x1="248.1" y1="419.4" x2="252.5" y2="415.0" stroke="#d0d0d0" stroke-width="1"/>
<g transform="rotate(-90 248.3 337.0)"><text x="248.3" y="337.0" font-size="6.3" fill="#f2f2f2" text-anchor="middle" textLength="12.6" lengthAdjust="spacingAndGlyphs" stroke="#f2f2f2" stroke-width="0.12">5000</text>
</g>
<line x1="965.0" y1="252.8" x2="965.0" y2="421.2" stroke="#a8a8a8" stroke-width="1"/>
<line x1="984.7" y1="252.8" x2="984.7" y2="421.2" stroke="#a8a8a8" stroke-width="1"/>
<line x1="962.8" y1="259.0" x2="967.2" y2="254.6" stroke="#d0d0d0" stroke-width="1"/>
<line x1="962.8" y1="283.5" x2="967.2" y2="279.1" stroke="#d0d0d0" stroke-width="1"/>
<line x1="962.8" y1="316.7" x2="967.2" y2="312.3" stroke="#d0d0d0" stroke-width="1"/>
<line x1="962.8" y1="419.4" x2="967.2" y2="415.0" stroke="#d0d0d0" stroke-width="1"/>
<line x1="982.5" y1="259.0" x2="986.9" y2="254.6" stroke="#d0d0d0" stroke-width="1"/>
<line x1="982.5" y1="419.4" x2="986.9" y2="415.0" stroke="#d0d0d0" stroke-width="1"/>
<line x1="938.1" y1="281.3" x2="970.0" y2="281.3" stroke="#a8a8a8" stroke-width="1"/>
<line x1="938.1" y1="314.5" x2="970.0" y2="314.5" stroke="#a8a8a8" stroke-width="1"/>
<g transform="rotate(-90 962.8 269.0)"><text x="962.8" y="269.0" font-size="6.3" fill="#f2f2f2" text-anchor="middle" textLength="9.4" lengthAdjust="spacingAndGlyphs" stroke="#f2f2f2" stroke-width="0.12">750</text>
</g>
<g transform="rotate(-90 962.8 298.0)"><text x="962.8" y="298.0" font-size="6.3" fill="#f2f2f2" text-anchor="middle" textLength="12.6" lengthAdjust="spacingAndGlyphs" stroke="#f2f2f2" stroke-width="0.12">1050</text>
</g>
<g transform="rotate(-90 962.8 365.0)"><text x="962.8" y="365.0" font-size="6.3" fill="#f2f2f2" text-anchor="middle" textLength="12.6" lengthAdjust="spacingAndGlyphs" stroke="#f2f2f2" stroke-width="0.12">3200</text>
</g>
<g transform="rotate(-90 982.5 337.0)"><text x="982.5" y="337.0" font-size="6.3" fill="#f2f2f2" text-anchor="middle" textLength="12.6" lengthAdjust="spacingAndGlyphs" stroke="#f2f2f2" stroke-width="0.12">5000</text>
</g>
<circle cx="219.0" cy="256.8" r="8.75" fill="#000" stroke="#d4d4d4" stroke-width="2.7"/>
<line x1="200.8" y1="256.8" x2="211.6" y2="256.8" stroke="#ececec" stroke-width="1.25"/>
<line x1="219.0" y1="238.9" x2="219.0" y2="249.7" stroke="#ececec" stroke-width="1.25"/>
<line x1="226.4" y1="256.8" x2="236.8" y2="256.8" stroke="#ececec" stroke-width="1.25"/>
<line x1="219.0" y1="264.5" x2="219.0" y2="274.9" stroke="#ececec" stroke-width="1.25"/>
<line x1="211.6" y1="256.8" x2="226.4" y2="256.8" stroke="#b8b8b8" stroke-width="1.0"/>
<line x1="219.0" y1="249.4" x2="219.0" y2="264.2" stroke="#b0b0b0" stroke-width="0.9"/>
<g><text x="217.8" y="261.5" font-size="12.5" fill="#f0f0f0" text-anchor="middle" textLength="6.6" lengthAdjust="spacingAndGlyphs" stroke="#f0f0f0" stroke-width="0.55">A</text>
</g>
<circle cx="219.0" cy="417.2" r="8.75" fill="#000" stroke="#d4d4d4" stroke-width="2.7"/>
<line x1="200.8" y1="417.2" x2="211.6" y2="417.2" stroke="#ececec" stroke-width="1.25"/>
<line x1="219.0" y1="399.3" x2="219.0" y2="410.1" stroke="#ececec" stroke-width="1.25"/>
<line x1="226.4" y1="417.2" x2="236.8" y2="417.2" stroke="#ececec" stroke-width="1.25"/>
<line x1="219.0" y1="424.9" x2="219.0" y2="435.3" stroke="#ececec" stroke-width="1.25"/>
<line x1="211.6" y1="417.2" x2="226.4" y2="417.2" stroke="#b8b8b8" stroke-width="1.0"/>
<line x1="219.0" y1="409.8" x2="219.0" y2="424.6" stroke="#b0b0b0" stroke-width="0.9"/>
<g><text x="217.8" y="421.9" font-size="12.5" fill="#f0f0f0" text-anchor="middle" textLength="6.6" lengthAdjust="spacingAndGlyphs" stroke="#f0f0f0" stroke-width="0.55">B</text>
</g>
<circle cx="547.7" cy="492.0" r="8.75" fill="#000" stroke="#d4d4d4" stroke-width="2.7"/>
<line x1="529.5" y1="492.0" x2="540.3" y2="492.0" stroke="#ececec" stroke-width="1.25"/>
<line x1="547.7" y1="474.1" x2="547.7" y2="484.9" stroke="#ececec" stroke-width="1.25"/>
<line x1="555.1" y1="492.0" x2="565.5" y2="492.0" stroke="#ececec" stroke-width="1.25"/>
<line x1="547.7" y1="499.7" x2="547.7" y2="510.1" stroke="#ececec" stroke-width="1.25"/>
<line x1="540.3" y1="492.0" x2="555.1" y2="492.0" stroke="#b8b8b8" stroke-width="1.0"/>
<line x1="547.7" y1="484.6" x2="547.7" y2="499.4" stroke="#b0b0b0" stroke-width="0.9"/>
<g><text x="546.5" y="496.7" font-size="12.5" fill="#f0f0f0" text-anchor="middle" textLength="6.6" lengthAdjust="spacingAndGlyphs" stroke="#f0f0f0" stroke-width="0.55">1</text>
</g>
<circle cx="689.1" cy="492.0" r="8.75" fill="#000" stroke="#d4d4d4" stroke-width="2.7"/>
<line x1="670.9" y1="492.0" x2="681.7" y2="492.0" stroke="#ececec" stroke-width="1.25"/>
<line x1="689.1" y1="474.1" x2="689.1" y2="484.9" stroke="#ececec" stroke-width="1.25"/>
<line x1="696.5" y1="492.0" x2="706.9" y2="492.0" stroke="#ececec" stroke-width="1.25"/>
<line x1="689.1" y1="499.7" x2="689.1" y2="510.1" stroke="#ececec" stroke-width="1.25"/>
<line x1="681.7" y1="492.0" x2="696.5" y2="492.0" stroke="#b8b8b8" stroke-width="1.0"/>
<line x1="689.1" y1="484.6" x2="689.1" y2="499.4" stroke="#b0b0b0" stroke-width="0.9"/>
<g><text x="687.9" y="496.7" font-size="12.5" fill="#f0f0f0" text-anchor="middle" textLength="6.6" lengthAdjust="spacingAndGlyphs" stroke="#f0f0f0" stroke-width="0.55">2</text>
</g>
<circle cx="777.5" cy="492.0" r="8.75" fill="#000" stroke="#d4d4d4" stroke-width="2.7"/>
<line x1="759.3" y1="492.0" x2="770.1" y2="492.0" stroke="#ececec" stroke-width="1.25"/>
<line x1="777.5" y1="474.1" x2="777.5" y2="484.9" stroke="#ececec" stroke-width="1.25"/>
<line x1="784.9" y1="492.0" x2="795.3" y2="492.0" stroke="#ececec" stroke-width="1.25"/>
<line x1="777.5" y1="499.7" x2="777.5" y2="510.1" stroke="#ececec" stroke-width="1.25"/>
<line x1="770.1" y1="492.0" x2="784.9" y2="492.0" stroke="#b8b8b8" stroke-width="1.0"/>
<line x1="777.5" y1="484.6" x2="777.5" y2="499.4" stroke="#b0b0b0" stroke-width="0.9"/>
<g><text x="776.3" y="496.7" font-size="12.5" fill="#f0f0f0" text-anchor="middle" textLength="6.6" lengthAdjust="spacingAndGlyphs" stroke="#f0f0f0" stroke-width="0.55">3</text>
</g>
<circle cx="938.1" cy="492.0" r="8.75" fill="#000" stroke="#d4d4d4" stroke-width="2.7"/>
<line x1="919.9" y1="492.0" x2="930.7" y2="492.0" stroke="#ececec" stroke-width="1.25"/>
<line x1="938.1" y1="474.1" x2="938.1" y2="484.9" stroke="#ececec" stroke-width="1.25"/>
<line x1="945.5" y1="492.0" x2="955.9" y2="492.0" stroke="#ececec" stroke-width="1.25"/>
<line x1="938.1" y1="499.7" x2="938.1" y2="510.1" stroke="#ececec" stroke-width="1.25"/>
<line x1="930.7" y1="492.0" x2="945.5" y2="492.0" stroke="#b8b8b8" stroke-width="1.0"/>
<line x1="938.1" y1="484.6" x2="938.1" y2="499.4" stroke="#b0b0b0" stroke-width="0.9"/>
<g><text x="936.9" y="496.7" font-size="12.5" fill="#f0f0f0" text-anchor="middle" textLength="6.6" lengthAdjust="spacingAndGlyphs" stroke="#f0f0f0" stroke-width="0.55">4</text>
</g>
<line x1="295.4" y1="260.0" x2="938.1" y2="260.0" stroke="#7e7e7e" stroke-width="1.3"/>
<line x1="295.4" y1="414.4" x2="938.1" y2="414.4" stroke="#7e7e7e" stroke-width="1.3"/>
<line x1="301.5" y1="260.0" x2="301.5" y2="414.4" stroke="#7e7e7e" stroke-width="1"/>
<line x1="301.5" y1="269.6" x2="547.7" y2="269.6" stroke="#7e7e7e" stroke-width="1.2"/>
<line x1="301.5" y1="272.8" x2="547.7" y2="272.8" stroke="#7e7e7e" stroke-width="1.2"/>
<line x1="301.5" y1="402.0" x2="547.7" y2="402.0" stroke="#7e7e7e" stroke-width="1.2"/>
<line x1="301.5" y1="405.2" x2="547.7" y2="405.2" stroke="#7e7e7e" stroke-width="1.2"/>
<line x1="528.5" y1="272.8" x2="528.5" y2="402.0" stroke="#7e7e7e" stroke-width="1"/>
<line x1="538.0" y1="272.8" x2="538.0" y2="402.0" stroke="#7e7e7e" stroke-width="1"/>
<polyline points="297.7,275.3 287.6,301.0 306.8,284.9" fill="none" stroke="#888" stroke-width="2.6" stroke-linejoin="round"/>
<polygon points="305.6,284.9 306.8,283.7 308.0,284.9 306.8,286.1" fill="none" stroke="#9a9a9a" stroke-width="0.8"/>
<polyline points="297.7,355.5 287.6,331.0 306.8,346.3" fill="none" stroke="#888" stroke-width="2.6" stroke-linejoin="round"/>
<polygon points="305.6,346.3 306.8,345.1 308.0,346.3 306.8,347.5" fill="none" stroke="#9a9a9a" stroke-width="0.8"/>
<line x1="297.7" y1="275.3" x2="301.5" y2="275.3" stroke="#7e7e7e" stroke-width="1"/>
<line x1="297.7" y1="355.5" x2="301.5" y2="355.5" stroke="#7e7e7e" stroke-width="1"/>
<path d="M301.5,367.1 Q291,366 284.5,369.1" fill="none" stroke="#7e7e7e" stroke-width="1.2"/>
<line x1="284.5" y1="369.1" x2="296.7" y2="399.0" stroke="#888" stroke-width="2.6"/>
<line x1="547.7" y1="260.0" x2="547.7" y2="414.4" stroke="#7e7e7e" stroke-width="1.2"/>
<line x1="673.4" y1="260.0" x2="673.4" y2="414.4" stroke="#7e7e7e" stroke-width="1.2"/>
<polyline points="554.3,263.5 554.3,281.0 547.7,281.0" fill="none" stroke="#7e7e7e" stroke-width="1"/>
<polyline points="554.3,411.0 554.3,393.5 547.7,393.5" fill="none" stroke="#7e7e7e" stroke-width="1"/>
<rect x="676.0" y="259.7" width="9.7" height="10.3" fill="none" stroke="#7e7e7e" stroke-width="1" rx="0"/>
<line x1="676.0" y1="259.7" x2="685.7" y2="270.0" stroke="#7e7e7e" stroke-width="0.8"/>
<line x1="685.7" y1="259.7" x2="676.0" y2="270.0" stroke="#7e7e7e" stroke-width="0.8"/>
<line x1="673.4" y1="272.8" x2="692.3" y2="272.8" stroke="#7e7e7e" stroke-width="1"/>
<rect x="676.0" y="404.6" width="9.7" height="9.8" fill="none" stroke="#7e7e7e" stroke-width="1" rx="0"/>
<line x1="676.0" y1="404.6" x2="685.7" y2="414.4" stroke="#7e7e7e" stroke-width="0.8"/>
<line x1="685.7" y1="404.6" x2="676.0" y2="414.4" stroke="#7e7e7e" stroke-width="0.8"/>
<line x1="673.4" y1="402.0" x2="692.3" y2="402.0" stroke="#7e7e7e" stroke-width="1"/>
<line x1="692.3" y1="402.0" x2="692.3" y2="414.4" stroke="#7e7e7e" stroke-width="1"/>
<circle cx="528.3" cy="336.8" r="1.8" fill="#777" stroke="#777" stroke-width="1"/>
<line x1="523.0" y1="336.8" x2="546.0" y2="336.8" stroke="#777" stroke-width="1"/>
<polyline points="543.5,333.0 546.5,336.8 543.5,340.6" fill="none" stroke="#777" stroke-width="1"/>
<line x1="689.8" y1="262.0" x2="689.8" y2="320.0" stroke="#7e7e7e" stroke-width="1"/>
<line x1="692.0" y1="262.0" x2="692.0" y2="321.0" stroke="#7e7e7e" stroke-width="1"/>
<rect x="698.0" y="260.2" width="17.4" height="3.6" fill="none" stroke="#7e7e7e" stroke-width="0.9" rx="0"/>
<line x1="692.0" y1="276.4" x2="719.6" y2="289.6" stroke="#7e7e7e" stroke-width="0.9"/>
<line x1="705.8" y1="265.0" x2="719.6" y2="289.6" stroke="#7e7e7e" stroke-width="0.9"/>
<line x1="706.4" y1="277.6" x2="706.4" y2="335.2" stroke="#7e7e7e" stroke-width="1"/>
<line x1="721.4" y1="277.6" x2="721.4" y2="323.0" stroke="#7e7e7e" stroke-width="1"/>
<line x1="723.8" y1="298.0" x2="723.8" y2="323.0" stroke="#7e7e7e" stroke-width="1"/>
<line x1="706.4" y1="277.6" x2="723.8" y2="277.6" stroke="#7e7e7e" stroke-width="1"/>
<line x1="692.0" y1="292.3" x2="721.4" y2="292.3" stroke="#7e7e7e" stroke-width="0.9"/>
<line x1="692.0" y1="300.4" x2="721.4" y2="300.4" stroke="#7e7e7e" stroke-width="0.9"/>
<line x1="692.0" y1="308.4" x2="721.4" y2="308.4" stroke="#7e7e7e" stroke-width="0.9"/>
<line x1="692.0" y1="316.4" x2="721.4" y2="316.4" stroke="#7e7e7e" stroke-width="0.9"/>
<line x1="692.0" y1="324.4" x2="721.4" y2="324.4" stroke="#7e7e7e" stroke-width="0.9"/>
<line x1="706.4" y1="284.6" x2="721.4" y2="284.6" stroke="#7e7e7e" stroke-width="0.9"/>
<path d="M692,319 Q682,320 681.2,328.5 Q681.5,335 689.6,335.8 L707,335.5 L722,332.8 Q731.5,333 731.5,327.5 Q731,320 723.8,320" fill="none" stroke="#7e7e7e" stroke-width="1.1"/>
<circle cx="686.6" cy="328.2" r="3.4" fill="none" stroke="#7e7e7e" stroke-width="1.1"/>
<circle cx="686.6" cy="328.2" r="1.4" fill="none" stroke="#7e7e7e" stroke-width="0.8"/>
<circle cx="726.2" cy="328.2" r="3.4" fill="none" stroke="#7e7e7e" stroke-width="1.1"/>
<circle cx="726.2" cy="328.2" r="1.4" fill="none" stroke="#7e7e7e" stroke-width="0.8"/>
<circle cx="707.0" cy="335.5" r="2.2" fill="#777" stroke="#777" stroke-width="1"/>
<line x1="731.5" y1="257.5" x2="726.0" y2="276.0" stroke="#7e7e7e" stroke-width="0.8"/>
<line x1="733.3" y1="257.5" x2="727.8" y2="276.0" stroke="#7e7e7e" stroke-width="0.8"/>
<line x1="722.3" y1="298.0" x2="736.0" y2="298.0" stroke="#7e7e7e" stroke-width="1"/>
<line x1="722.3" y1="295.0" x2="736.0" y2="295.0" stroke="#7e7e7e" stroke-width="1"/>
<line x1="736.0" y1="295.0" x2="736.0" y2="298.0" stroke="#7e7e7e" stroke-width="1"/>
<rect x="738.2" y="291.4" width="7.8" height="7.8" fill="#7c7c7c" stroke="none" stroke-width="0" rx="0"/>
<rect x="741.8" y="299.2" width="39.0" height="18.6" fill="none" stroke="#7e7e7e" stroke-width="1" rx="0"/>
<polyline points="745.4,299.2 745.4,314.8 778.4,314.8" fill="none" stroke="#7e7e7e" stroke-width="0.9"/>
<ellipse cx="752.0" cy="303.4" rx="5.6" ry="8" fill="none" stroke="#7e7e7e" stroke-width="2.4"/>
<ellipse cx="752.0" cy="303.4" rx="3" ry="5.2" fill="none" stroke="#7e7e7e" stroke-width="0.8"/>
<ellipse cx="732.8" cy="275.8" rx="4" ry="7" fill="none" stroke="#7e7e7e" stroke-width="1"/>
<ellipse cx="744.2" cy="276.0" rx="9" ry="6.3" fill="none" stroke="#7e7e7e" stroke-width="1"/>
<line x1="778.0" y1="285.0" x2="778.0" y2="318.0" stroke="#7e7e7e" stroke-width="1"/>
<polyline points="779.0,283.5 801.5,283.5 801.5,285.5 779.0,285.5" fill="none" stroke="#7e7e7e" stroke-width="0.9"/>
<line x1="780.7" y1="259.3" x2="780.7" y2="316.0" stroke="#7e7e7e" stroke-width="1"/>
<line x1="770.0" y1="316.0" x2="780.7" y2="316.0" stroke="#7e7e7e" stroke-width="1"/>
<line x1="784.0" y1="279.0" x2="896.6" y2="279.0" stroke="#7e7e7e" stroke-width="1"/>
<line x1="784.0" y1="276.0" x2="896.6" y2="276.0" stroke="#7e7e7e" stroke-width="1"/>
<rect x="798.5" y="263.3" width="32.9" height="14.5" fill="none" stroke="#7e7e7e" stroke-width="1" rx="0"/>
<rect x="801.0" y="265.3" width="28.0" height="10.5" fill="none" stroke="#7e7e7e" stroke-width="0.8" rx="0"/>
<line x1="815.0" y1="265.3" x2="815.0" y2="275.8" stroke="#7e7e7e" stroke-width="0.8"/>
<rect x="855.4" y="262.8" width="30.1" height="14.8" fill="none" stroke="#7e7e7e" stroke-width="1" rx="0"/>
<circle cx="861.5" cy="269.2" r="4.2" fill="none" stroke="#7e7e7e" stroke-width="1"/>
<circle cx="861.5" cy="269.2" r="1.9" fill="none" stroke="#7e7e7e" stroke-width="0.8"/>
<circle cx="879.8" cy="269.2" r="4.2" fill="none" stroke="#7e7e7e" stroke-width="1"/>
<circle cx="879.8" cy="269.2" r="1.9" fill="none" stroke="#7e7e7e" stroke-width="0.8"/>
<line x1="868.4" y1="265.0" x2="868.4" y2="273.6" stroke="#7e7e7e" stroke-width="1.6"/>
<line x1="872.2" y1="265.0" x2="872.2" y2="273.6" stroke="#7e7e7e" stroke-width="1.6"/>
<line x1="864.0" y1="276.0" x2="879.0" y2="276.0" stroke="#7e7e7e" stroke-width="1" stroke-dasharray="1.5 1"/>
<rect x="784.5" y="262.0" width="8.5" height="15.0" fill="none" stroke="#7e7e7e" stroke-width="0.8" rx="0"/>
<line x1="896.6" y1="259.3" x2="896.6" y2="313.8" stroke="#7e7e7e" stroke-width="1"/>
<line x1="899.7" y1="259.3" x2="899.7" y2="313.8" stroke="#7e7e7e" stroke-width="1"/>
<line x1="899.7" y1="282.5" x2="934.0" y2="282.5" stroke="#7e7e7e" stroke-width="1"/>
<line x1="899.7" y1="279.5" x2="934.0" y2="279.5" stroke="#7e7e7e" stroke-width="1"/>
<path d="M900,283.1 A28.3,28.6 0 0 1 927.8,311.7" fill="none" stroke="#7e7e7e" stroke-width="1"/>
<rect x="895.3" y="282.0" width="2.5" height="2.5" fill="none" stroke="#7e7e7e" stroke-width="0.8" rx="0"/>
<rect x="895.3" y="311.0" width="2.5" height="2.5" fill="none" stroke="#7e7e7e" stroke-width="0.8" rx="0"/>
<polyline points="899.0,312.3 926.0,312.3 926.0,310.6 903.0,310.6" fill="none" stroke="#7e7e7e" stroke-width="0.9"/>
<line x1="845.2" y1="349.0" x2="845.2" y2="414.0" stroke="#7e7e7e" stroke-width="1"/>
<line x1="848.0" y1="349.0" x2="848.0" y2="414.0" stroke="#7e7e7e" stroke-width="1"/>
<line x1="848.0" y1="349.0" x2="866.0" y2="325.3" stroke="#7e7e7e" stroke-width="1"/>
<line x1="841.4" y1="307.6" x2="865.8" y2="325.0" stroke="#7e7e7e" stroke-width="2.8"/>
<line x1="842.6" y1="308.5" x2="864.6" y2="324.2" stroke="#000" stroke-width="0.7"/>
<path d="M841.4,308 A30,30 0 0 0 848,349" fill="none" stroke="#7e7e7e" stroke-width="1"/>
<rect x="846.0" y="347.5" width="4.0" height="3.5" fill="none" stroke="#7e7e7e" stroke-width="0.8" rx="0"/>
<polyline points="866.0,325.3 872.0,314.6 899.7,314.6" fill="none" stroke="#7e7e7e" stroke-width="1"/>
<polyline points="868.5,323.6 878.3,330.2 934.0,330.2" fill="none" stroke="#7e7e7e" stroke-width="1"/>
<polyline points="866.0,325.3 869.5,327.6" fill="none" stroke="#7e7e7e" stroke-width="1"/>
<line x1="872.6" y1="317.0" x2="909.5" y2="317.0" stroke="#7e7e7e" stroke-width="0.8"/>
<rect x="909.5" y="314.6" width="23.0" height="3.6" fill="#6c6c6c" stroke="none" stroke-width="0" rx="0"/>
<line x1="878.3" y1="318.9" x2="903.7" y2="318.9" stroke="#9a9a9a" stroke-width="1.4" stroke-dasharray="1.6 1"/>
<line x1="935.7" y1="260.0" x2="935.7" y2="414.4" stroke="#7e7e7e" stroke-width="1"/>
<polyline points="692.3,414.4 742.0,414.4 742.0,410.4 748.0,410.4" fill="none" stroke="#7e7e7e" stroke-width="0.9"/>
<line x1="748.0" y1="409.8" x2="774.0" y2="409.8" stroke="#9a9a9a" stroke-width="1.4" stroke-dasharray="1.6 1"/>
<polygon points="932.4,296.7 934.2,294.6 936.0,296.7 934.2,298.8" fill="#555" stroke="#8a8a8a" stroke-width="0.8"/>
<rect x="294.9" y="256.9" width="6.8" height="6.8" fill="#7c7c7c" stroke="none" stroke-width="0" rx="0"/>
<rect x="418.2" y="256.9" width="6.8" height="6.8" fill="#7c7c7c" stroke="none" stroke-width="0" rx="0"/>
<rect x="547.7" y="256.9" width="6.8" height="6.8" fill="#7c7c7c" stroke="none" stroke-width="0" rx="0"/>
<rect x="685.9" y="256.9" width="6.8" height="6.8" fill="#7c7c7c" stroke="none" stroke-width="0" rx="0"/>
<rect x="774.5" y="256.9" width="6.8" height="6.8" fill="#7c7c7c" stroke="none" stroke-width="0" rx="0"/>
<rect x="931.8" y="256.9" width="6.8" height="6.8" fill="#7c7c7c" stroke="none" stroke-width="0" rx="0"/>
<rect x="294.9" y="410.9" width="6.8" height="6.8" fill="#7c7c7c" stroke="none" stroke-width="0" rx="0"/>
<rect x="418.2" y="410.9" width="6.8" height="6.8" fill="#7c7c7c" stroke="none" stroke-width="0" rx="0"/>
<rect x="547.7" y="410.9" width="6.8" height="6.8" fill="#7c7c7c" stroke="none" stroke-width="0" rx="0"/>
<rect x="685.9" y="410.9" width="6.8" height="6.8" fill="#7c7c7c" stroke="none" stroke-width="0" rx="0"/>
<rect x="774.5" y="410.9" width="6.8" height="6.8" fill="#7c7c7c" stroke="none" stroke-width="0" rx="0"/>
<rect x="931.8" y="410.9" width="6.8" height="6.8" fill="#7c7c7c" stroke="none" stroke-width="0" rx="0"/>
<g><text x="298.7" y="321.0" font-size="5.4" fill="#9a9a9a" textLength="31.3" lengthAdjust="spacingAndGlyphs">LỐI ĐI CHÍNH</text>
<line x1="298.7" y1="322.7" x2="330.0" y2="322.7" stroke="#9a9a9a" stroke-width="0.8"/>
</g>
</g>
<g><text x="1894.5" y="384.3" font-size="5.4" fill="#9a9a9a" textLength="25.7" lengthAdjust="spacingAndGlyphs">PHÒNG ĂN</text>
<line x1="1894.5" y1="386.0" x2="1920.2" y2="386.0" stroke="#9a9a9a" stroke-width="0.8"/>
</g>
<g><text x="1979.6" y="357.6" font-size="5.4" fill="#9a9a9a" textLength="33.6" lengthAdjust="spacingAndGlyphs">PHÒNG NGỦ 1</text>
<line x1="1979.6" y1="359.3" x2="2013.2" y2="359.3" stroke="#9a9a9a" stroke-width="0.8"/>
</g>
<g><text x="1921.4" y="296.4" font-size="5.4" fill="#9a9a9a" textLength="28.4" lengthAdjust="spacingAndGlyphs">PHÒNG BẾP</text>
<line x1="1921.4" y1="298.1" x2="1949.8" y2="298.1" stroke="#9a9a9a" stroke-width="0.8"/>
</g>
<g><text x="1395.8" y="380.0" font-size="5.4" fill="#9a9a9a" textLength="26.0" lengthAdjust="spacingAndGlyphs">LỐI ĐI PHỤ</text>
<line x1="1395.8" y1="381.7" x2="1421.8" y2="381.7" stroke="#9a9a9a" stroke-width="0.8"/>
</g>
<g><text x="1504.6" y="345.0" font-size="5.4" fill="#9a9a9a" textLength="27.8" lengthAdjust="spacingAndGlyphs">SÂN TRƯỚC</text>
<line x1="1504.6" y1="346.7" x2="1532.4" y2="346.7" stroke="#9a9a9a" stroke-width="0.8"/>
</g>
<g><text x="1721.7" y="345.0" font-size="5.4" fill="#9a9a9a" textLength="35.9" lengthAdjust="spacingAndGlyphs">PHÒNG KHÁCH</text>
<line x1="1721.7" y1="346.7" x2="1757.6" y2="346.7" stroke="#9a9a9a" stroke-width="0.8"/>
</g>
<g><text x="1852.0" y="271.5" font-size="5" fill="#9a9a9a" textLength="11.4" lengthAdjust="spacingAndGlyphs">WC 1</text>
</g>
<line x1="1274.5" y1="339.2" x2="1274.5" y2="539.8" stroke="#f00000" stroke-width="3" stroke-dasharray="25.6 2.8 4.8 2.8" stroke-dashoffset="3.4"/>
<polyline points="1268.6,384.5 1274.6,375.8 1280.8,384.5" fill="none" stroke="#ff8000" stroke-width="2.4"/>
<g transform="rotate(-90 1267.7 528.6)"><text x="1267.7" y="528.6" font-size="7.2" fill="#ffffff" textLength="119.5" lengthAdjust="spacingAndGlyphs" stroke="#ffffff" stroke-width="0.28">NGUỒN THOÁT NƯỚC THÀNH PHỐ</text>
</g>
<line x1="1276.0" y1="400.6" x2="1435.0" y2="400.6" stroke="#0000e6" stroke-width="1.45" stroke-dasharray="6.5 2.3" stroke-dashoffset="4.60"/>
<polyline points="1282.5,402.9 1279.8,400.6 1282.5,398.3" fill="none" stroke="#0000e6" stroke-width="0.9"/>
<polyline points="1308.9,402.9 1306.2,400.6 1308.9,398.3" fill="none" stroke="#0000e6" stroke-width="0.9"/>
<polyline points="1335.3,402.9 1332.6,400.6 1335.3,398.3" fill="none" stroke="#0000e6" stroke-width="0.9"/>
<polyline points="1361.7,402.9 1359.0,400.6 1361.7,398.3" fill="none" stroke="#0000e6" stroke-width="0.9"/>
<polyline points="1388.1,402.9 1385.4,400.6 1388.1,398.3" fill="none" stroke="#0000e6" stroke-width="0.9"/>
<polyline points="1414.5,402.9 1411.8,400.6 1414.5,398.3" fill="none" stroke="#0000e6" stroke-width="0.9"/>
<line x1="1435.0" y1="404.2" x2="1614.5" y2="404.2" stroke="#0000e6" stroke-width="1.45" stroke-dasharray="6.5 2.3" stroke-dashoffset="7.60"/>
<polyline points="1447.3,406.5 1444.6,404.2 1447.3,401.9" fill="none" stroke="#0000e6" stroke-width="0.9"/>
<polyline points="1473.7,406.5 1471.0,404.2 1473.7,401.9" fill="none" stroke="#0000e6" stroke-width="0.9"/>
<polyline points="1500.1,406.5 1497.4,404.2 1500.1,401.9" fill="none" stroke="#0000e6" stroke-width="0.9"/>
<polyline points="1526.5,406.5 1523.8,404.2 1526.5,401.9" fill="none" stroke="#0000e6" stroke-width="0.9"/>
<polyline points="1552.9,406.5 1550.2,404.2 1552.9,401.9" fill="none" stroke="#0000e6" stroke-width="0.9"/>
<polyline points="1579.3,406.5 1576.6,404.2 1579.3,401.9" fill="none" stroke="#0000e6" stroke-width="0.9"/>
<polyline points="1605.7,406.5 1603.0,404.2 1605.7,401.9" fill="none" stroke="#0000e6" stroke-width="0.9"/>
<line x1="1614.5" y1="405.2" x2="1790.0" y2="389.2" stroke="#0000e6" stroke-width="1.45" stroke-dasharray="6.5 2.3" stroke-dashoffset="4.60"/>
<polyline points="1629.9,406.1 1627.0,404.1 1629.5,401.5" fill="none" stroke="#0000e6" stroke-width="0.9"/>
<polyline points="1656.2,403.7 1653.3,401.7 1655.8,399.1" fill="none" stroke="#0000e6" stroke-width="0.9"/>
<polyline points="1682.5,401.3 1679.6,399.3 1682.1,396.7" fill="none" stroke="#0000e6" stroke-width="0.9"/>
<polyline points="1708.8,398.9 1705.9,396.9 1708.4,394.3" fill="none" stroke="#0000e6" stroke-width="0.9"/>
<polyline points="1735.1,396.5 1732.2,394.5 1734.7,391.9" fill="none" stroke="#0000e6" stroke-width="0.9"/>
<polyline points="1761.4,394.1 1758.5,392.1 1761.0,389.5" fill="none" stroke="#0000e6" stroke-width="0.9"/>
<polyline points="1787.7,391.7 1784.8,389.7 1787.3,387.1" fill="none" stroke="#0000e6" stroke-width="0.9"/>
<g><text x="1313.7" y="397.0" font-size="6.5" fill="#ffffff" textLength="37.3" lengthAdjust="spacingAndGlyphs" stroke="#ffffff" stroke-width="0.28">BTCT Ø300</text>
</g>
<g><text x="1471.8" y="399.0" font-size="6.5" fill="#ffffff" textLength="33.3" lengthAdjust="spacingAndGlyphs" stroke="#ffffff" stroke-width="0.28">PVC Ø200</text>
</g>
<g><text x="1545.0" y="399.0" font-size="6.5" fill="#ffffff" textLength="33.3" lengthAdjust="spacingAndGlyphs" stroke="#ffffff" stroke-width="0.28">PVC Ø200</text>
</g>
<g><text x="1703.3" y="391.6" font-size="6.5" fill="#ffffff" textLength="33.6" lengthAdjust="spacingAndGlyphs" stroke="#ffffff" stroke-width="0.28">PVC Ø200</text>
</g>
<line x1="1501.4" y1="409.8" x2="1475.4" y2="409.8" stroke="#ff8000" stroke-width="1.4"/>
<polyline points="1480.4,413.4 1475.4,409.8 1480.4,406.2" fill="none" stroke="#ff8000" stroke-width="2.5"/>
<line x1="1573.7" y1="409.8" x2="1548.0" y2="409.8" stroke="#ff8000" stroke-width="1.4"/>
<polyline points="1553.0,413.4 1548.0,409.8 1553.0,406.2" fill="none" stroke="#ff8000" stroke-width="2.5"/>
<line x1="1732.3" y1="400.2" x2="1707.6" y2="402.4" stroke="#ff8000" stroke-width="1.4"/>
<polyline points="1712.9,405.5 1707.6,402.4 1712.3,398.4" fill="none" stroke="#ff8000" stroke-width="2.5"/>
<rect x="1424.3" y="394.6" width="19.7" height="19.7" fill="none" stroke="#6a9fe0" stroke-width="1.3" rx="0"/>
<rect x="1426.3" y="396.6" width="15.7" height="15.7" fill="none" stroke="#909090" stroke-width="1" rx="0"/>
<line x1="1426.3" y1="396.6" x2="1442.0" y2="412.3" stroke="#909090" stroke-width="1"/>
<line x1="1442.0" y1="396.6" x2="1426.3" y2="412.3" stroke="#909090" stroke-width="1"/>
<g><text x="1429.8" y="406.3" font-size="5" fill="#ddd" textLength="9.0" lengthAdjust="spacingAndGlyphs">HG</text>
</g>
<rect x="1604.8" y="394.6" width="19.7" height="19.7" fill="none" stroke="#6a9fe0" stroke-width="1.3" rx="0"/>
<rect x="1606.8" y="396.6" width="15.7" height="15.7" fill="none" stroke="#909090" stroke-width="1" rx="0"/>
<line x1="1606.8" y1="396.6" x2="1622.5" y2="412.3" stroke="#909090" stroke-width="1"/>
<line x1="1622.5" y1="396.6" x2="1606.8" y2="412.3" stroke="#909090" stroke-width="1"/>
<g><text x="1610.3" y="406.3" font-size="5" fill="#ddd" textLength="9.0" lengthAdjust="spacingAndGlyphs">HG</text>
</g>
<rect x="1673.7" y="401.2" width="95.3" height="12.6" fill="none" stroke="#8a8a8a" stroke-width="1" rx="0"/>
<path d="M1704,407 L1741,407 L1742,409.5 L1738,412 L1707,412 L1703,409.5 Z" fill="none" stroke="#8a8a8a" stroke-width="1"/>
<circle cx="1729.3" cy="423.2" r="2" fill="#777" stroke="#777" stroke-width="1"/>
<line x1="1724.0" y1="423.2" x2="1749.0" y2="423.2" stroke="#777" stroke-width="1"/>
<line x1="1434.0" y1="291.9" x2="1453.8" y2="291.9" stroke="#00e600" stroke-width="1.8"/>
<polyline points="1453.6,294.3 1451.4,291.9 1453.6,289.5" fill="none" stroke="#00e600" stroke-width="0.9"/>
<line x1="1456.7" y1="291.9" x2="1475.7" y2="291.9" stroke="#00e600" stroke-width="1.8"/>
<polyline points="1475.5,294.3 1473.3,291.9 1475.5,289.5" fill="none" stroke="#00e600" stroke-width="0.9"/>
<line x1="1478.6" y1="291.9" x2="1497.6" y2="291.9" stroke="#00e600" stroke-width="1.8"/>
<polyline points="1497.4,294.3 1495.2,291.9 1497.4,289.5" fill="none" stroke="#00e600" stroke-width="0.9"/>
<line x1="1500.5" y1="291.9" x2="1519.5" y2="291.9" stroke="#00e600" stroke-width="1.8"/>
<polyline points="1519.3,294.3 1517.1,291.9 1519.3,289.5" fill="none" stroke="#00e600" stroke-width="0.9"/>
<line x1="1522.4" y1="291.9" x2="1541.4" y2="291.9" stroke="#00e600" stroke-width="1.8"/>
<polyline points="1541.2,294.3 1539.0,291.9 1541.2,289.5" fill="none" stroke="#00e600" stroke-width="0.9"/>
<line x1="1544.3" y1="291.9" x2="1561.9" y2="291.9" stroke="#00e600" stroke-width="1.8"/>
<line x1="1434.0" y1="371.4" x2="1453.8" y2="371.4" stroke="#00e600" stroke-width="1.8"/>
<polyline points="1453.6,373.8 1451.4,371.4 1453.6,369.0" fill="none" stroke="#00e600" stroke-width="0.9"/>
<line x1="1456.7" y1="371.4" x2="1475.7" y2="371.4" stroke="#00e600" stroke-width="1.8"/>
<polyline points="1475.5,373.8 1473.3,371.4 1475.5,369.0" fill="none" stroke="#00e600" stroke-width="0.9"/>
<line x1="1478.6" y1="371.4" x2="1497.6" y2="371.4" stroke="#00e600" stroke-width="1.8"/>
<polyline points="1497.4,373.8 1495.2,371.4 1497.4,369.0" fill="none" stroke="#00e600" stroke-width="0.9"/>
<line x1="1500.5" y1="371.4" x2="1519.5" y2="371.4" stroke="#00e600" stroke-width="1.8"/>
<polyline points="1519.3,373.8 1517.1,371.4 1519.3,369.0" fill="none" stroke="#00e600" stroke-width="0.9"/>
<line x1="1522.4" y1="371.4" x2="1541.4" y2="371.4" stroke="#00e600" stroke-width="1.8"/>
<polyline points="1541.2,373.8 1539.0,371.4 1541.2,369.0" fill="none" stroke="#00e600" stroke-width="0.9"/>
<line x1="1544.3" y1="371.4" x2="1561.9" y2="371.4" stroke="#00e600" stroke-width="1.8"/>
<g><text x="1499.2" y="283.1" font-size="9.6" fill="#ffffff" font-weight="bold" textLength="19.0" lengthAdjust="spacingAndGlyphs" stroke="#ffffff" stroke-width="0.5">i=2%</text>
</g>
<line x1="1529.0" y1="286.0" x2="1490.0" y2="286.0" stroke="#c8c8c8" stroke-width="1.2"/>
<polygon points="1486.0,286.0 1492.5,284.3 1492.5,287.7" fill="#e0e0e0" stroke="#e0e0e0" stroke-width="0.5"/>
<g><text x="1459.7" y="302.0" font-size="7.3" fill="#ffffff" textLength="91.6" lengthAdjust="spacingAndGlyphs" stroke="#ffffff" stroke-width="0.28">thoát nước mưa trên mặt Sân</text>
</g>
<g><text x="1499.2" y="362.6" font-size="9.6" fill="#ffffff" font-weight="bold" textLength="19.0" lengthAdjust="spacingAndGlyphs" stroke="#ffffff" stroke-width="0.5">i=2%</text>
</g>
<line x1="1529.0" y1="365.5" x2="1490.0" y2="365.5" stroke="#c8c8c8" stroke-width="1.2"/>
<polygon points="1486.0,365.5 1492.5,363.8 1492.5,367.2" fill="#e0e0e0" stroke="#e0e0e0" stroke-width="0.5"/>
<g><text x="1459.7" y="381.5" font-size="7.3" fill="#ffffff" textLength="91.6" lengthAdjust="spacingAndGlyphs" stroke="#ffffff" stroke-width="0.28">thoát nước mưa trên mặt Sân</text>
</g>
<line x1="1617.4" y1="400.5" x2="1777.8" y2="264.0" stroke="#00e600" stroke-width="1.5"/>
<rect x="1640.4" y="377.8" width="3.6" height="3.6" fill="#000" stroke="#00e600" stroke-width="1" transform="rotate(-40 1642.2 379.6)"/>
<rect x="1658.4" y="362.5" width="3.6" height="3.6" fill="#000" stroke="#00e600" stroke-width="1" transform="rotate(-40 1660.2 364.3)"/>
<rect x="1676.4" y="347.1" width="3.6" height="3.6" fill="#000" stroke="#00e600" stroke-width="1" transform="rotate(-40 1678.2 348.9)"/>
<rect x="1694.4" y="331.8" width="3.6" height="3.6" fill="#000" stroke="#00e600" stroke-width="1" transform="rotate(-40 1696.2 333.6)"/>
<rect x="1712.4" y="316.5" width="3.6" height="3.6" fill="#000" stroke="#00e600" stroke-width="1" transform="rotate(-40 1714.2 318.3)"/>
<rect x="1730.4" y="301.2" width="3.6" height="3.6" fill="#000" stroke="#00e600" stroke-width="1" transform="rotate(-40 1732.2 303.0)"/>
<rect x="1748.4" y="285.8" width="3.6" height="3.6" fill="#000" stroke="#00e600" stroke-width="1" transform="rotate(-40 1750.2 287.6)"/>
<rect x="1766.4" y="270.5" width="3.6" height="3.6" fill="#000" stroke="#00e600" stroke-width="1" transform="rotate(-40 1768.2 272.3)"/>
<g transform="rotate(-40.4 1692.0 349.0)"><text x="1692.0" y="349.0" font-size="7.2" fill="#ffffff" textLength="68.0" lengthAdjust="spacingAndGlyphs" stroke="#ffffff" stroke-width="0.28">nước mưa PVC Ø114</text>
</g>
<line x1="1714.0" y1="311.3" x2="1694.4" y2="326.7" stroke="#ff8000" stroke-width="1.4"/>
<polyline points="1700.6,326.4 1694.4,326.7 1696.1,320.7" fill="none" stroke="#ff8000" stroke-width="2.5"/>
<circle cx="1777.8" cy="264.0" r="1.6" fill="none" stroke="#0000e6" stroke-width="1.2"/>
<polyline points="1802.7,332.8 1867.1,332.8 1867.1,396.6 1783.2,396.6 1783.2,377.3 1802.7,377.3 1802.7,332.8" fill="none" stroke="#0000e6" stroke-width="1.5"/>
<line x1="1821.7" y1="332.8" x2="1821.7" y2="396.6" stroke="#0000e6" stroke-width="1.5"/>
<line x1="1802.7" y1="364.4" x2="1821.7" y2="364.4" stroke="#0000e6" stroke-width="1.5"/>
<line x1="1802.7" y1="377.3" x2="1802.7" y2="396.6" stroke="#0000e6" stroke-width="1.5"/>
<line x1="1829.5" y1="276.2" x2="1841.2" y2="341.0" stroke="#0000e6" stroke-width="2.6"/>
<line x1="1880.0" y1="267.6" x2="1858.9" y2="347.3" stroke="#0000e6" stroke-width="2.6"/>
<circle cx="1832.0" cy="288.8" r="1.8" fill="#000" stroke="#0000e6" stroke-width="1.2"/>
<circle cx="1835.8" cy="312.0" r="1.8" fill="#000" stroke="#0000e6" stroke-width="1.2"/>
<circle cx="1878.0" cy="280.3" r="1.8" fill="#000" stroke="#0000e6" stroke-width="1.2"/>
<circle cx="1871.4" cy="302.5" r="1.8" fill="#000" stroke="#0000e6" stroke-width="1.2"/>
<circle cx="1865.4" cy="325.2" r="1.8" fill="#000" stroke="#0000e6" stroke-width="1.2"/>
<line x1="1791.4" y1="384.0" x2="1796.2" y2="371.9" stroke="#00e600" stroke-width="1.6"/>
<polyline points="1798.5,372.5 1795.5,373.7 1794.0,370.7" fill="none" stroke="#00e600" stroke-width="0.9"/>
<line x1="1797.6" y1="368.2" x2="1803.2" y2="354.0" stroke="#00e600" stroke-width="1.6"/>
<polyline points="1805.6,354.6 1802.5,355.8 1801.1,352.9" fill="none" stroke="#00e600" stroke-width="0.9"/>
<line x1="1804.7" y1="350.3" x2="1810.2" y2="336.2" stroke="#00e600" stroke-width="1.6"/>
<polyline points="1812.6,336.8 1809.5,337.9 1808.1,335.0" fill="none" stroke="#00e600" stroke-width="0.9"/>
<line x1="1811.7" y1="332.5" x2="1817.3" y2="318.3" stroke="#00e600" stroke-width="1.6"/>
<polyline points="1819.6,318.9 1816.6,320.1 1815.1,317.1" fill="none" stroke="#00e600" stroke-width="0.9"/>
<line x1="1818.7" y1="314.6" x2="1824.3" y2="300.4" stroke="#00e600" stroke-width="1.6"/>
<polyline points="1826.7,301.1 1823.6,302.2 1822.2,299.3" fill="none" stroke="#00e600" stroke-width="0.9"/>
<line x1="1825.8" y1="296.7" x2="1828.5" y2="289.8" stroke="#00e600" stroke-width="1.6"/>
<line x1="1795.8" y1="389.0" x2="1803.8" y2="377.5" stroke="#00e600" stroke-width="1.6"/>
<polyline points="1806.0,378.7 1802.7,379.1 1802.0,375.9" fill="none" stroke="#00e600" stroke-width="0.9"/>
<line x1="1806.4" y1="373.9" x2="1815.5" y2="360.8" stroke="#00e600" stroke-width="1.6"/>
<polyline points="1817.7,362.0 1814.5,362.4 1813.7,359.2" fill="none" stroke="#00e600" stroke-width="0.9"/>
<line x1="1818.1" y1="357.2" x2="1827.3" y2="344.1" stroke="#00e600" stroke-width="1.6"/>
<polyline points="1829.4,345.3 1826.2,345.7 1825.4,342.5" fill="none" stroke="#00e600" stroke-width="0.9"/>
<line x1="1829.8" y1="340.5" x2="1839.0" y2="327.4" stroke="#00e600" stroke-width="1.6"/>
<polyline points="1841.1,328.6 1837.9,329.0 1837.2,325.8" fill="none" stroke="#00e600" stroke-width="0.9"/>
<line x1="1841.5" y1="323.8" x2="1850.7" y2="310.7" stroke="#00e600" stroke-width="1.6"/>
<polyline points="1852.8,311.9 1849.6,312.3 1848.9,309.1" fill="none" stroke="#00e600" stroke-width="0.9"/>
<line x1="1853.2" y1="307.1" x2="1862.4" y2="294.0" stroke="#00e600" stroke-width="1.6"/>
<polyline points="1864.5,295.2 1861.3,295.6 1860.6,292.4" fill="none" stroke="#00e600" stroke-width="0.9"/>
<line x1="1864.9" y1="290.4" x2="1874.1" y2="277.3" stroke="#00e600" stroke-width="1.6"/>
<polyline points="1876.2,278.5 1873.0,278.9 1872.3,275.7" fill="none" stroke="#00e600" stroke-width="0.9"/>
<line x1="1876.6" y1="273.7" x2="1880.2" y2="268.6" stroke="#00e600" stroke-width="1.6"/>
<polyline points="1820.4,310.0 1833.5,308.0 1849.7,303.5" fill="none" stroke="#00e600" stroke-width="1.6" stroke-dasharray="9 3"/>
<line x1="1795.2" y1="392.4" x2="1870.9" y2="382.7" stroke="#00e600" stroke-width="1.6"/>
<rect x="1821.8" y="387.2" width="3.6" height="3.6" fill="#000" stroke="#00e600" stroke-width="1" rx="0"/>
<rect x="1845.8" y="384.2" width="3.6" height="3.6" fill="#000" stroke="#00e600" stroke-width="1" rx="0"/>
<rect x="1869.1" y="381.2" width="3.6" height="3.6" fill="#000" stroke="#00e600" stroke-width="1" rx="0"/>
<polyline points="1870.9,382.7 1883.5,381.4 1911.1,368.4 2029.6,313.4" fill="none" stroke="#00e600" stroke-width="1.6"/>
<rect x="1909.4" y="366.4" width="3.8" height="3.8" fill="#000" stroke="#00e600" stroke-width="1" transform="rotate(-25 1911.3 368.3)"/>
<rect x="1931.1" y="356.3" width="3.8" height="3.8" fill="#000" stroke="#00e600" stroke-width="1" transform="rotate(-25 1933.0 358.2)"/>
<rect x="1952.6" y="346.3" width="3.8" height="3.8" fill="#000" stroke="#00e600" stroke-width="1" transform="rotate(-25 1954.5 348.2)"/>
<rect x="1973.4" y="336.7" width="3.8" height="3.8" fill="#000" stroke="#00e600" stroke-width="1" transform="rotate(-25 1975.3 338.6)"/>
<rect x="1994.9" y="326.7" width="3.8" height="3.8" fill="#000" stroke="#00e600" stroke-width="1" transform="rotate(-25 1996.8 328.6)"/>
<rect x="2016.0" y="316.9" width="3.8" height="3.8" fill="#000" stroke="#00e600" stroke-width="1" transform="rotate(-25 2017.9 318.8)"/>
<line x1="1911.6" y1="266.0" x2="1911.6" y2="368.0" stroke="#00e600" stroke-width="1.4" stroke-dasharray="9 2.5"/>
<polyline points="1909.0,264.0 1911.6,268.0 1914.2,264.0" fill="none" stroke="#00e600" stroke-width="1"/>
<line x1="2029.6" y1="313.4" x2="2019.0" y2="266.7" stroke="#00e600" stroke-width="1.4" stroke-dasharray="9 3"/>
<g transform="rotate(-67.6 1789.7 375.4)"><text x="1789.7" y="375.4" font-size="6.3" fill="#ffffff" textLength="73.0" lengthAdjust="spacingAndGlyphs" stroke="#ffffff" stroke-width="0.28">nước bẩn PVC Ø90</text>
</g>
<g transform="rotate(-54 1793.3 389.8)"><text x="1793.3" y="389.8" font-size="6.3" fill="#ffffff" textLength="62.4" lengthAdjust="spacingAndGlyphs" stroke="#ffffff" stroke-width="0.28">nước bẩn PVC Ø90</text>
</g>
<g transform="rotate(-40 1823.0 321.5)"><text x="1823.0" y="321.5" font-size="6.3" fill="#ffffff" textLength="13.0" lengthAdjust="spacingAndGlyphs" stroke="#ffffff" stroke-width="0.28">Ø90</text>
</g>
<g transform="rotate(-100.6 1844.2 371.6)"><text x="1844.2" y="371.6" font-size="6.3" fill="#ffffff" textLength="51.4" lengthAdjust="spacingAndGlyphs" stroke="#ffffff" stroke-width="0.28">phân PVC Ø114</text>
</g>
<g transform="rotate(-75.2 1862.9 336.2)"><text x="1862.9" y="336.2" font-size="6.3" fill="#ffffff" textLength="52.0" lengthAdjust="spacingAndGlyphs" stroke="#ffffff" stroke-width="0.28">phân PVC Ø114</text>
</g>
<g transform="rotate(-56.3 1854.0 303.8)"><text x="1854.0" y="303.8" font-size="6.3" fill="#ffffff" textLength="40.2" lengthAdjust="spacingAndGlyphs" stroke="#ffffff" stroke-width="0.28">bẩn PVC Ø90</text>
</g>
<g transform="rotate(-8.6 1810.6 390.7)"><text x="1810.6" y="390.7" font-size="6.3" fill="#ffffff" textLength="63.2" lengthAdjust="spacingAndGlyphs" stroke="#ffffff" stroke-width="0.28">nước mưa PVC Ø90</text>
</g>
<g transform="rotate(-90 1909.5 347.0)"><text x="1909.5" y="347.0" font-size="7.2" fill="#ffffff" textLength="61.0" lengthAdjust="spacingAndGlyphs" stroke="#ffffff" stroke-width="0.28">nước bẩn PVC Ø60</text>
</g>
<g transform="rotate(-25 1936.5 354.5)"><text x="1936.5" y="354.5" font-size="7" fill="#ffffff" textLength="60.0" lengthAdjust="spacingAndGlyphs" stroke="#ffffff" stroke-width="0.28">nước mưa PVC  Ø90</text>
</g>
<g transform="rotate(75.5 2001.5 240.5)"><text x="2001.5" y="240.5" font-size="7" fill="#ffffff" textLength="62.0" lengthAdjust="spacingAndGlyphs" stroke="#ffffff" stroke-width="0.28">nước bẩn PVC Ø60</text>
</g>
<line x1="1918.0" y1="314.0" x2="1918.0" y2="339.0" stroke="#ff8000" stroke-width="1.4"/>
<polyline points="1921.6,334.0 1918.0,339.0 1914.4,334.0" fill="none" stroke="#ff8000" stroke-width="2.5"/>
<line x1="1979.9" y1="344.2" x2="1957.7" y2="355.1" stroke="#ff8000" stroke-width="1.4"/>
<polyline points="1963.8,356.1 1957.7,355.1 1960.6,349.6" fill="none" stroke="#ff8000" stroke-width="2.5"/>
<line x1="1843.8" y1="323.4" x2="1848.8" y2="346.0" stroke="#ff8000" stroke-width="1.4"/>
<polyline points="1851.2,340.3 1848.8,346.0 1844.2,341.9" fill="none" stroke="#ff8000" stroke-width="2.5"/>
<line x1="1876.6" y1="311.4" x2="1870.3" y2="335.4" stroke="#ff8000" stroke-width="1.4"/>
<polyline points="1875.1,331.4 1870.3,335.4 1868.1,329.6" fill="none" stroke="#ff8000" stroke-width="2.5"/>
<line x1="1828.6" y1="358.0" x2="1813.5" y2="378.3" stroke="#ff8000" stroke-width="1.4"/>
<polyline points="1819.4,376.4 1813.5,378.3 1813.6,372.1" fill="none" stroke="#ff8000" stroke-width="2.5"/>
<line x1="1856.4" y1="390.7" x2="1831.1" y2="394.0" stroke="#ff8000" stroke-width="1.4"/>
<polyline points="1836.6,396.9 1831.1,394.0 1835.6,389.8" fill="none" stroke="#ff8000" stroke-width="2.5"/>
<path d="M1898.6,284.3 Q1898,301 1878.2,304.3" fill="none" stroke="#e60000" stroke-width="1.3"/>
<g><text x="1595.4" y="106.8" font-size="7.2" fill="#ffffff" textLength="113.0" lengthAdjust="spacingAndGlyphs" stroke="#ffffff" stroke-width="0.28">ỐNG THOÁT NƯỚC MƯA PVC Ø90</text>
</g>
<polyline points="1606.0,109.6 1709.5,109.6 1777.7,264.0" fill="none" stroke="#e600e6" stroke-width="1.2"/>
<g><text x="1954.9" y="106.8" font-size="7.2" fill="#ffffff" textLength="112.3" lengthAdjust="spacingAndGlyphs" stroke="#ffffff" stroke-width="0.28">ỐNG THOÁT NƯỚC BẨN PVC Ø90</text>
</g>
<polyline points="2056.7,109.6 1954.0,109.6 1880.4,266.9" fill="none" stroke="#e600e6" stroke-width="1.2"/>
<g><text x="1958.7" y="123.6" font-size="7.2" fill="#ffffff" textLength="121.6" lengthAdjust="spacingAndGlyphs" stroke="#ffffff" stroke-width="0.28">ỐNG THOÁT NƯỚC PHÂN PVC Ø114</text>
</g>
<polyline points="2061.7,126.0 1958.7,126.0 1883.0,269.0" fill="none" stroke="#e600e6" stroke-width="1.2"/>
<rect x="2001.8" y="261.0" width="22.0" height="17.5" fill="none" stroke="#8a8a8a" stroke-width="1" rx="0"/>
<line x1="2002.8" y1="262.0" x2="2022.8" y2="277.5" stroke="#8a8a8a" stroke-width="0.9"/>
<line x1="2022.8" y1="262.0" x2="2002.8" y2="277.5" stroke="#8a8a8a" stroke-width="0.9"/>
<g><text x="1634.3" y="577.0" font-size="15.8" fill="#8484f8" textLength="194.7" lengthAdjust="spacingAndGlyphs">MẶT BẰNG THOÁT NƯỚC TRỆT</text>
</g>
<line x1="1633.6" y1="580.8" x2="1829.5" y2="580.8" stroke="#7878ea" stroke-width="1.6"/>
<g><text x="1707.8" y="593.8" font-size="10" fill="#8484f8" textLength="49.5" lengthAdjust="spacingAndGlyphs">TỈ LỆ : 1/100</text>
</g>
<line x1="1707.8" y1="596.2" x2="1757.8" y2="596.2" stroke="#7878ea" stroke-width="1.3"/>
<text x="2275" y="17.3" font-size="22" font-weight="bold" fill="#9a9a9a">S</text>
<rect x="2258.3" y="39.4" width="40" height="17.2" rx="2.5" fill="#9a9aa6" fill-opacity="0.88"/>
<text x="2262.6" y="50.7" font-size="10.4" fill="#3c3c40" textLength="23.4" lengthAdjust="spacingAndGlyphs">WCS</text>
</svg>
</body></html>
